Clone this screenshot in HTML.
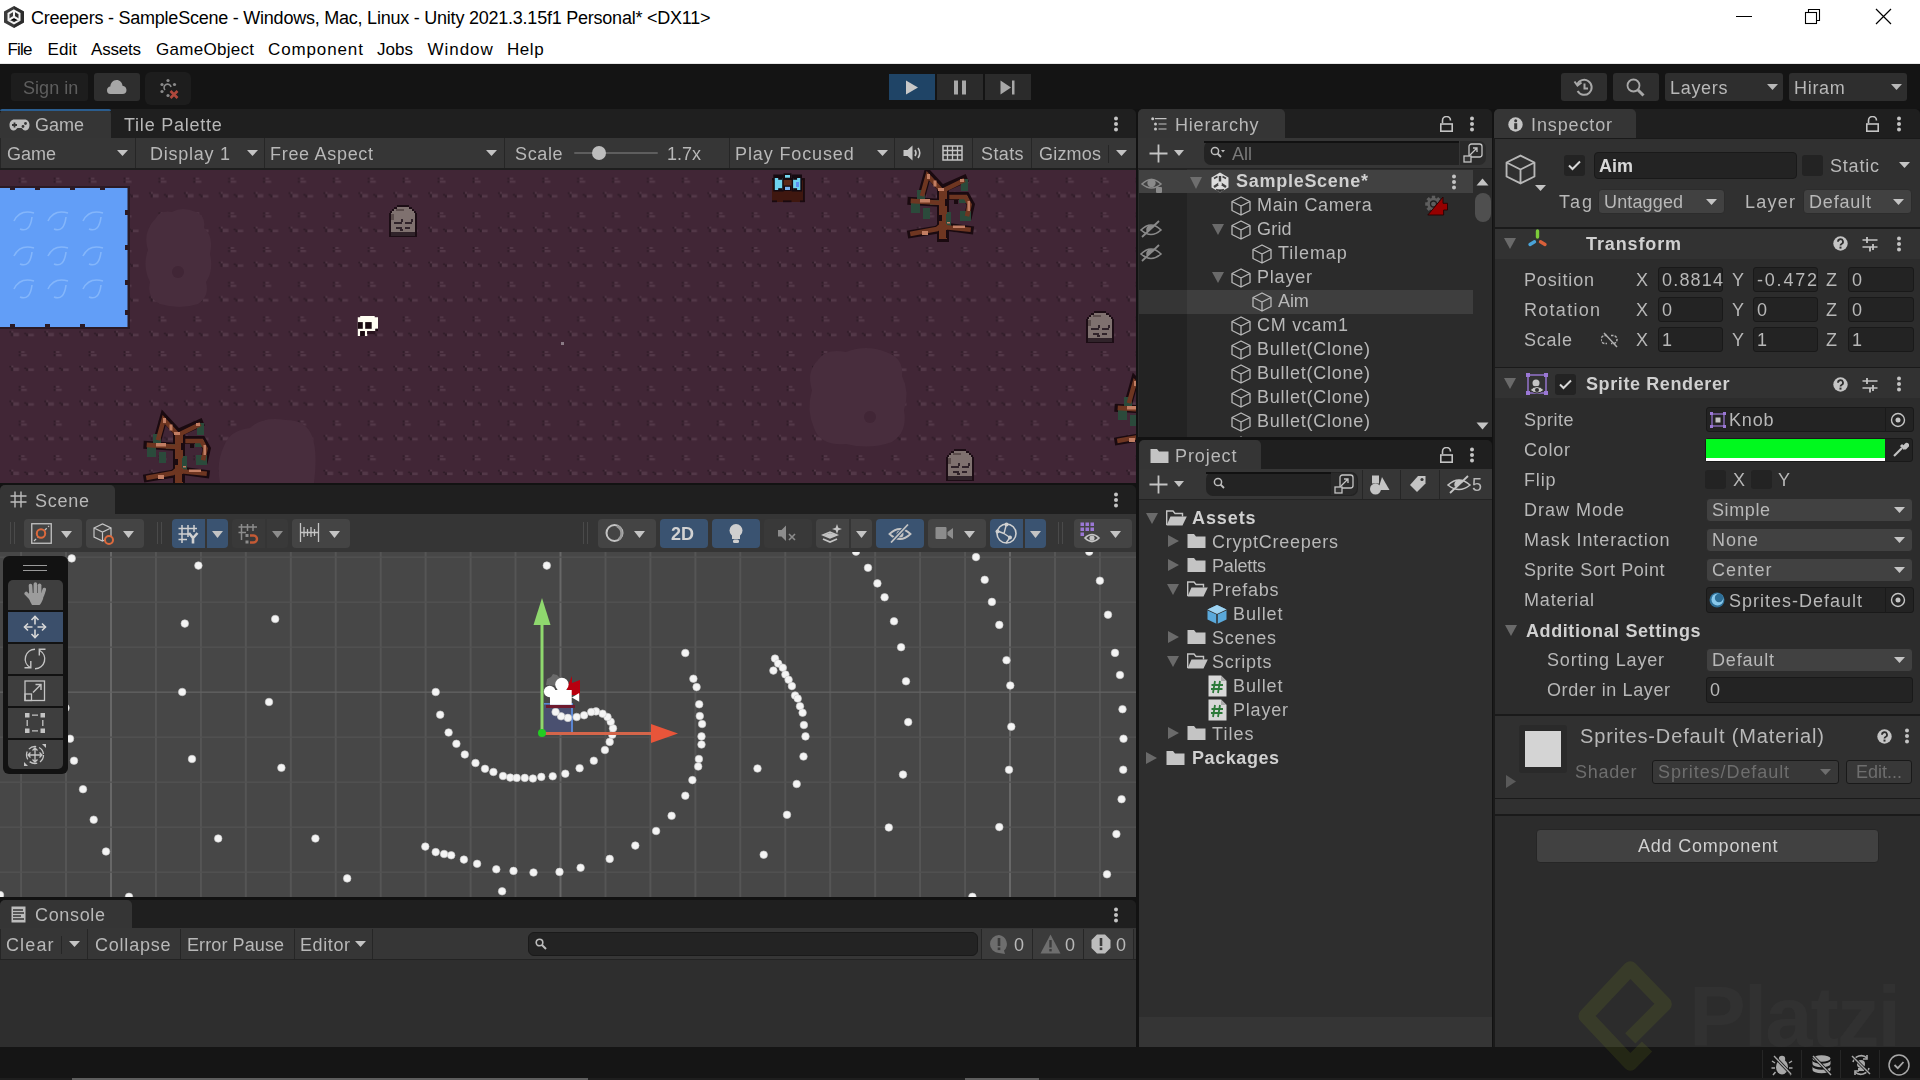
<!DOCTYPE html><html><head><meta charset="utf-8"><style>
*{margin:0;padding:0;box-sizing:border-box}
html,body{width:1920px;height:1080px;overflow:hidden;background:#121212;font-family:"Liberation Sans", sans-serif}
body>div,body>span{position:absolute}
.t{position:absolute;white-space:nowrap;line-height:1;font-family:"Liberation Sans", sans-serif;will-change:transform}
</style></head><body>
<div style="left:0px;top:0px;width:1920px;height:64px;background:#ffffff;"></div>
<div style="left:0px;top:63px;width:1920px;height:1px;background:#e8e8e8;"></div>
<span class="t" style="left:31.0px;top:9.12px;font-size:18px;letter-spacing:-0.231px;color:#000;font-weight:normal;will-change:auto">Creepers - SampleScene - Windows, Mac, Linux - Unity 2021.3.15f1 Personal* &lt;DX11&gt;</span>
<span class="t" style="left:7.5px;top:41.31px;font-size:17px;letter-spacing:-0.8px;color:#000;font-weight:normal;will-change:auto">File</span>
<span class="t" style="left:47.6px;top:41.31px;font-size:17px;letter-spacing:0.017px;color:#000;font-weight:normal;will-change:auto">Edit</span>
<span class="t" style="left:91.0px;top:41.31px;font-size:17px;letter-spacing:-0.2px;color:#000;font-weight:normal;will-change:auto">Assets</span>
<span class="t" style="left:156.0px;top:41.31px;font-size:17px;letter-spacing:0.278px;color:#000;font-weight:normal;will-change:auto">GameObject</span>
<span class="t" style="left:268.0px;top:41.31px;font-size:17px;letter-spacing:0.875px;color:#000;font-weight:normal;will-change:auto">Component</span>
<span class="t" style="left:377.0px;top:41.31px;font-size:17px;letter-spacing:0.0px;color:#000;font-weight:normal;will-change:auto">Jobs</span>
<span class="t" style="left:427.5px;top:41.31px;font-size:17px;letter-spacing:0.95px;color:#000;font-weight:normal;will-change:auto">Window</span>
<span class="t" style="left:507.0px;top:41.31px;font-size:17px;letter-spacing:0.567px;color:#000;font-weight:normal;will-change:auto">Help</span>
<div style="left:0px;top:64px;width:1920px;height:45px;background:#141414;"></div>
<svg style="position:absolute;left:3px;top:5px;" width="22" height="24" viewBox="0 0 22 24"><path d="M11 1L21 6.5V17.5L11 23L1 17.5V6.5Z" fill="#3a3a3a"/><path d="M11 1L21 6.5V17.5L11 23Z" fill="#1e1e1e" opacity=".5"/><path d="M11 5.5L16.5 8.7V15.2L11 18.4L5.5 15.2V8.7Z" fill="none" stroke="#f2f2f2" stroke-width="2"/><path d="M11 5.5V11.8M5.5 15.2L11 11.8L16.5 15.2" stroke="#f2f2f2" stroke-width="2"/></svg>
<div style="left:1736px;top:16px;width:16px;height:1px;background:#000;"></div>
<svg style="position:absolute;left:1804px;top:8px;" width="18" height="17" viewBox="0 0 18 17"><rect x="1.5" y="4.5" width="11" height="11" fill="none" stroke="#000" stroke-width="1.1"/><path d="M4.5 4.5V1.5H15.5V12.5H12.5" fill="none" stroke="#000" stroke-width="1.1"/></svg>
<svg style="position:absolute;left:1875px;top:8px;" width="18" height="17" viewBox="0 0 18 17"><path d="M1 1L16 16M16 1L1 16" stroke="#000" stroke-width="1.2"/></svg>
<div style="left:11px;top:73px;width:77px;height:28px;background:#1d1d1d;border-radius:3px"></div>
<span class="t" style="left:22.5px;top:78.52px;font-size:18px;letter-spacing:0.05px;color:#5e5e5e;font-weight:normal;">Sign in</span>
<div style="left:94px;top:73px;width:46px;height:28px;background:#2e2e2e;border-radius:3px"></div>
<svg style="position:absolute;left:106px;top:79px;" width="22" height="16" viewBox="0 0 22 16"><path d="M4.5 15C2 15 1 13.2 1 11.2C1 9.2 2.4 7.8 4.3 7.6C4.6 4 6.8 1 10.5 1C14 1 16.2 3.5 16.5 6.8C18.8 7 20.5 8.8 20.5 11C20.5 13.5 19 15 16.5 15Z" fill="#a6a6a6"/></svg>
<div style="left:145px;top:72px;width:46px;height:33px;background:#1d1d1d;border-radius:6px"></div>
<svg style="position:absolute;left:158px;top:78px;" width="24" height="24" viewBox="0 0 24 24"><circle cx="10" cy="2.5" r="1.6" fill="#8a8a8a"/><circle cx="4" cy="6.5" r="1.6" fill="#8a8a8a"/><circle cx="16.5" cy="6.5" r="1.6" fill="#8a8a8a"/><circle cx="4" cy="13.5" r="1.6" fill="#8a8a8a"/><circle cx="10" cy="17.5" r="1.6" fill="#8a8a8a"/><path d="M7 12A3.5 3.5 0 1 1 13 9" fill="none" stroke="#8a8a8a" stroke-width="1.6"/><path d="M12.5 13L19.5 20M19.5 13L12.5 20" stroke="#b0483c" stroke-width="2.6"/></svg>
<div style="left:889px;top:74px;width:46px;height:26px;background:#1f4466;"></div>
<svg style="position:absolute;left:905px;top:80px;" width="14" height="15" viewBox="0 0 14 15"><path d="M1 0.5L13 7.5L1 14.5Z" fill="#c8c8c8"/></svg>
<div style="left:937px;top:74px;width:46px;height:26px;background:#2b2b2b;"></div>
<svg style="position:absolute;left:953px;top:80px;" width="14" height="15" viewBox="0 0 14 15"><rect x="1" y="0.5" width="4" height="14" fill="#a8a8a8"/><rect x="9" y="0.5" width="4" height="14" fill="#a8a8a8"/></svg>
<div style="left:985px;top:74px;width:46px;height:26px;background:#2b2b2b;"></div>
<svg style="position:absolute;left:1000px;top:80px;" width="16" height="15" viewBox="0 0 16 15"><path d="M0.5 0.5L11 7.5L0.5 14.5Z" fill="#a8a8a8"/><rect x="12" y="0.5" width="2.5" height="14" fill="#a8a8a8"/></svg>
<div style="left:1561px;top:73px;width:46px;height:28px;background:#2e2e2e;border-radius:3px"></div>
<svg style="position:absolute;left:1573px;top:76px;" width="22" height="22" viewBox="0 0 22 22"><path d="M4.2 8.5A7.5 7.5 0 1 1 4.6 15" fill="none" stroke="#a8a8a8" stroke-width="2"/><path d="M1.5 5.5L4.5 9.5L8.5 6.5" fill="none" stroke="#a8a8a8" stroke-width="2"/><path d="M11.5 7.5V12.5H15" fill="none" stroke="#a8a8a8" stroke-width="2"/></svg>
<div style="left:1613px;top:73px;width:46px;height:28px;background:#2e2e2e;border-radius:3px"></div>
<svg style="position:absolute;left:1626px;top:78px;" width="20" height="20" viewBox="0 0 20 20"><circle cx="7.5" cy="7.5" r="6" fill="none" stroke="#a8a8a8" stroke-width="1.8"/><path d="M12 12L17.5 17.5" stroke="#a8a8a8" stroke-width="3"/></svg>
<div style="left:1665px;top:73px;width:118px;height:28px;background:#2e2e2e;border-radius:3px"></div>
<span class="t" style="left:1670px;top:78.52px;font-size:18px;letter-spacing:0.7px;color:#b8b8b8;font-weight:normal;">Layers</span>
<svg style="position:absolute;left:1767px;top:84px;" width="11" height="6" viewBox="0 0 11 6"><path d="M0 0H11L5.5 6Z" fill="#b8b8b8"/></svg>
<div style="left:1789px;top:73px;width:118px;height:28px;background:#2e2e2e;border-radius:3px"></div>
<span class="t" style="left:1794px;top:78.52px;font-size:18px;letter-spacing:0.7px;color:#b8b8b8;font-weight:normal;">Hiram</span>
<svg style="position:absolute;left:1891px;top:84px;" width="11" height="6" viewBox="0 0 11 6"><path d="M0 0H11L5.5 6Z" fill="#b8b8b8"/></svg>
<svg width="0" height="0" style="position:absolute"><defs>
<pattern id="tiles" x="9.3" y="7.6" width="34.9" height="34.7" patternUnits="userSpaceOnUse">
<rect x="0" y="0" width="34.9" height="34.7" fill="#412636"/>
<rect x="9.5" y="-0.3" width="2.2" height="2.2" fill="#301c28"/><rect x="11.7" y="-0.3" width="3.6" height="2.2" fill="#533848"/><rect x="9.5" y="3" width="2.2" height="2.2" fill="#301c28"/><rect x="11.7" y="3" width="5.8" height="2.2" fill="#533848"/>
<rect x="-0.2" y="14.7" width="2.2" height="1.7" fill="#301c28"/><rect x="2" y="14.5" width="2" height="1.8" fill="#533848"/><rect x="1.7" y="16.5" width="2.2" height="3.4" fill="#301c28"/><rect x="3.9" y="16.5" width="5.8" height="3.4" fill="#533848"/>
<rect x="14.8" y="16.4" width="2.2" height="1.6" fill="#301c28"/><rect x="16.7" y="17.3" width="2.2" height="2.6" fill="#301c28"/><rect x="18.9" y="17.3" width="5.6" height="2.6" fill="#533848"/>
</pattern>
<g id="tree">
<g fill="none" stroke="#1a0a10" stroke-linecap="square" stroke-linejoin="miter">
<path d="M11.7 25L17.7 3.4L32 19L53.6 9.4" stroke-width="8"/><path d="M33 22V66" stroke-width="12"/><path d="M33 33L1.5 31" stroke-width="8"/>
<path d="M41.6 26H56L60.8 34.5L58.4 45" stroke-width="8"/><path d="M1.5 64L27 59.7L33 55" stroke-width="8"/><path d="M38 57L59.6 60" stroke-width="8"/>
</g>
<g fill="#2b4a3b"><rect x="7" y="20" width="8" height="9"/><rect x="1" y="33" width="9" height="10"/><rect x="13" y="38" width="7" height="11"/><rect x="51" y="9" width="7" height="12"/><rect x="49" y="26" width="9" height="7"/><rect x="50" y="41" width="11" height="10"/><rect x="35" y="42" width="6" height="14"/><rect x="20" y="30" width="10" height="5"/></g>
<g fill="none" stroke="#6e3621" stroke-linecap="square" stroke-linejoin="miter">
<path d="M12.5 24L17.7 5.5L32 21L52.5 11" stroke-width="4.6"/><path d="M33 23V65" stroke-width="8"/><path d="M31 33L3 31" stroke-width="4.6"/>
<path d="M41.6 27H55.5L59.5 34.5L57.5 44" stroke-width="4.6"/><path d="M2.5 63.5L27 59L32 55" stroke-width="4.6"/><path d="M38 57.5L58.5 59.5" stroke-width="4.6"/>
</g>
<g fill="#1a0a10"><rect x="35" y="29" width="4" height="7"/><rect x="29" y="45" width="3" height="6"/><rect x="36" y="60" width="3" height="8"/><rect x="44" y="30" width="4" height="4"/></g>
<g fill="#2b4a3b"><rect x="36" y="44" width="4" height="10"/></g>
<g fill="#c27e63"><rect x="17" y="4" width="3" height="5"/><rect x="23.5" y="10.5" width="3" height="6"/><rect x="28" y="18" width="6" height="3"/><rect x="50" y="9" width="4" height="3"/><rect x="10" y="29" width="10" height="3.5"/><rect x="57.5" y="31" width="2.5" height="10"/><rect x="12" y="61" width="6" height="4"/><rect x="43" y="55.5" width="12" height="2.5"/><rect x="37" y="52" width="3" height="1.5"/></g>
</g>
<g id="tomb">
<path d="M9 0H21V2H24V4H26V6H28V8H29V32H1V8H2V6H4V4H6V2H9Z" fill="#1c0d15"/>
<path d="M9 2H21V4H24V6H26V8H27V28H3V8H4V6H6V4H9Z" fill="#7f716f"/>
<rect x="3" y="27" width="24" height="4" fill="#30232a"/>
<rect x="8" y="4" width="8" height="2" fill="#5b4d4c"/><rect x="3" y="9" width="3" height="6" fill="#5b4d4c"/>
<g fill="#30232a"><rect x="13" y="14" width="2" height="3"/><rect x="6" y="17" width="8" height="2"/><rect x="17" y="17" width="7" height="2"/><rect x="8" y="22" width="6" height="2"/><rect x="17" y="22" width="5" height="2"/><rect x="12" y="24" width="3" height="2"/><rect x="23" y="14" width="2" height="3"/></g>
</g>
</defs></svg>
<div style="left:0px;top:109px;width:1136px;height:29px;background:#1f1f1f;border-radius:5px 5px 0 0"></div>
<div style="left:0px;top:109px;width:111px;height:29px;background:#353535;border-radius:5px 5px 0 0"></div>
<div style="left:0px;top:109px;width:111px;height:2px;background:#2b5d8e;border-radius:4px 4px 0 0"></div>
<svg style="position:absolute;left:9px;top:119px;" width="21" height="12" viewBox="0 0 21 12"><path d="M5.5 0.5H15.5C18.8 0.5 20.5 3 20.5 6C20.5 9.3 18.8 11.5 16.2 11.5C14.5 11.5 13.8 10 12.5 9H8.5C7.2 10 6.5 11.5 4.8 11.5C2.2 11.5 0.5 9.3 0.5 6C0.5 3 2.2 0.5 5.5 0.5Z" fill="#bdbdbd"/><path d="M5.5 3.5V8.5M3 6H8" stroke="#353535" stroke-width="1.8"/><circle cx="14" cy="7.5" r="1.4" fill="#353535"/><circle cx="16.5" cy="4.5" r="1.4" fill="#353535"/></svg>
<span class="t" style="left:35.0px;top:115.82px;font-size:18px;letter-spacing:0.0px;color:#b8b8b8;font-weight:normal;">Game</span>
<span class="t" style="left:124.0px;top:115.82px;font-size:18px;letter-spacing:0.773px;color:#b8b8b8;font-weight:normal;">Tile Palette</span>
<svg style="position:absolute;left:1112.5px;top:116px;" width="6" height="16" viewBox="0 0 6 16"><circle cx="3" cy="2.5" r="2" fill="#c4c4c4"/><circle cx="3" cy="8" r="2" fill="#c4c4c4"/><circle cx="3" cy="13.5" r="2" fill="#c4c4c4"/></svg>
<div style="left:0px;top:138px;width:1136px;height:31px;background:#363636;"></div>
<div style="left:0px;top:168px;width:1136px;height:2px;background:#1e1e1e;"></div>
<div style="left:135px;top:138px;width:1px;height:30px;background:#262626;"></div>
<div style="left:264px;top:138px;width:1px;height:30px;background:#262626;"></div>
<div style="left:504px;top:138px;width:1px;height:30px;background:#262626;"></div>
<div style="left:729px;top:138px;width:1px;height:30px;background:#262626;"></div>
<div style="left:894px;top:138px;width:1px;height:30px;background:#262626;"></div>
<div style="left:933px;top:138px;width:1px;height:30px;background:#262626;"></div>
<div style="left:972px;top:138px;width:1px;height:30px;background:#262626;"></div>
<div style="left:1031px;top:138px;width:1px;height:30px;background:#262626;"></div>
<div style="left:1108px;top:145px;width:1px;height:18px;background:#262626;"></div>
<div style="left:0px;top:138px;width:1px;height:30px;background:#262626;"></div>
<span class="t" style="left:6.5px;top:144.72px;font-size:18px;letter-spacing:0.0px;color:#b8b8b8;font-weight:normal;">Game</span>
<svg style="position:absolute;left:117px;top:150px;" width="11" height="6" viewBox="0 0 11 6"><path d="M0 0H11L5.5 6Z" fill="#c4c4c4"/></svg>
<span class="t" style="left:150.0px;top:144.72px;font-size:18px;letter-spacing:0.75px;color:#b8b8b8;font-weight:normal;">Display 1</span>
<svg style="position:absolute;left:246.5px;top:150px;" width="11" height="6" viewBox="0 0 11 6"><path d="M0 0H11L5.5 6Z" fill="#c4c4c4"/></svg>
<span class="t" style="left:270.0px;top:144.72px;font-size:18px;letter-spacing:0.7px;color:#b8b8b8;font-weight:normal;">Free Aspect</span>
<svg style="position:absolute;left:486px;top:150px;" width="11" height="6" viewBox="0 0 11 6"><path d="M0 0H11L5.5 6Z" fill="#c4c4c4"/></svg>
<span class="t" style="left:514.5px;top:144.72px;font-size:18px;letter-spacing:0.625px;color:#b8b8b8;font-weight:normal;">Scale</span>
<div style="left:574px;top:152px;width:84px;height:2px;background:#5e5e5e;border-radius:1px"></div>
<svg style="position:absolute;left:591px;top:145px;" width="16" height="16" viewBox="0 0 16 16"><circle cx="8" cy="8" r="7" fill="#bcbcbc"/></svg>
<span class="t" style="left:667.0px;top:144.72px;font-size:18px;letter-spacing:0.0px;color:#b8b8b8;font-weight:normal;">1.7x</span>
<span class="t" style="left:735.0px;top:144.72px;font-size:18px;letter-spacing:0.882px;color:#b8b8b8;font-weight:normal;">Play Focused</span>
<svg style="position:absolute;left:876.5px;top:150px;" width="11" height="6" viewBox="0 0 11 6"><path d="M0 0H11L5.5 6Z" fill="#c4c4c4"/></svg>
<svg style="position:absolute;left:903px;top:145px;" width="20" height="16" viewBox="0 0 20 16"><path d="M0.5 5H4.5L9.5 0.5V15.5L4.5 11H0.5Z" fill="#c4c4c4"/><path d="M12 5Q14 8 12 11M15 3Q18.5 8 15 13" fill="none" stroke="#c4c4c4" stroke-width="1.6"/></svg>
<svg style="position:absolute;left:942px;top:145px;" width="21" height="16" viewBox="0 0 21 16"><rect x="1" y="1" width="19" height="14" fill="none" stroke="#c4c4c4" stroke-width="1.5"/><path d="M1 5.5H20M1 10H20M5.5 1V15M10.5 1V15M15.5 1V15" stroke="#c4c4c4" stroke-width="1.3"/></svg>
<span class="t" style="left:981.0px;top:144.72px;font-size:18px;letter-spacing:0.375px;color:#b8b8b8;font-weight:normal;">Stats</span>
<span class="t" style="left:1038.5px;top:144.72px;font-size:18px;letter-spacing:0.2px;color:#b8b8b8;font-weight:normal;">Gizmos</span>
<svg style="position:absolute;left:1115.5px;top:150px;" width="11" height="6" viewBox="0 0 11 6"><path d="M0 0H11L5.5 6Z" fill="#c4c4c4"/></svg>
<svg style="position:absolute;left:0px;top:170px;" width="1136" height="313" viewBox="0 0 1136 313"><rect width="1136" height="313" fill="url(#tiles)"/><g fill="#482d3d"><path d="M156 48Q160 40 172 42Q182 36 196 42Q206 46 204 58Q214 66 210 84Q214 100 206 112Q210 126 198 134Q180 140 160 134Q146 128 150 112Q142 96 148 80Q142 62 156 48Z"/><path d="M818 190Q826 178 846 182Q866 174 886 182Q904 188 902 206Q910 222 904 240Q908 262 892 272Q870 280 846 274Q820 276 814 258Q806 240 812 220Q806 202 818 190Z"/><path d="M224 276Q230 260 250 258Q262 246 286 250Q306 250 312 266Q318 282 314 313H220Q216 292 224 276Z"/></g><circle cx="178" cy="102" r="6" fill="#412636"/><circle cx="870" cy="247" r="6" fill="#412636"/><rect x="0" y="16" width="130" height="143" fill="#2b1a24"/><rect x="0" y="18" width="127.5" height="139" fill="#629ef7"/><g fill="#2b1a24"><rect x="10" y="16" width="5" height="4"/><rect x="35" y="16" width="5" height="4"/><rect x="70" y="16" width="5" height="4"/><rect x="100" y="16" width="5" height="4"/><rect x="10" y="154" width="5" height="4"/><rect x="45" y="154" width="5" height="4"/><rect x="80" y="154" width="5" height="4"/><rect x="125" y="40" width="4" height="5"/><rect x="125" y="75" width="4" height="5"/><rect x="125" y="110" width="4" height="5"/><rect x="125" y="140" width="4" height="5"/></g><g fill="none" stroke="#84b6fb" stroke-width="1.6"><path d="M14 51 Q20 39 34 43 M20 59 Q30 63 32 47"/><path d="M48 51 Q54 39 68 43 M54 59 Q64 63 66 47"/><path d="M83 51 Q89 39 103 43 M89 59 Q99 63 101 47"/><path d="M14 86 Q20 74 34 78 M20 94 Q30 98 32 82"/><path d="M48 86 Q54 74 68 78 M54 94 Q64 98 66 82"/><path d="M83 86 Q89 74 103 78 M89 94 Q99 98 101 82"/><path d="M14 119 Q20 107 34 111 M20 127 Q30 131 32 115"/><path d="M48 119 Q54 107 68 111 M54 127 Q64 131 66 115"/><path d="M83 119 Q89 107 103 111 M89 127 Q99 131 101 115"/></g><use href="#tomb" x="388" y="35"/><use href="#tomb" x="1085" y="141"/><use href="#tomb" x="945" y="279"/><use href="#tree" x="910" y="0"/><use href="#tree" x="146" y="244"/><use href="#tree" x="1117" y="207"/><rect x="772" y="8.2" width="32.7" height="23.8" fill="#3f170f"/><rect x="772" y="8.2" width="32.7" height="2" fill="#1a0a10"/><rect x="803" y="8.2" width="1.8" height="23.8" fill="#1a0a10"/><rect x="782.2" y="10" width="11" height="10" fill="#5a2818"/><rect x="773.3" y="4.5" width="10.4" height="17" fill="#150a10"/><rect x="774.8" y="8" width="7.4" height="12" fill="#6fd3ef"/><rect x="778.2" y="8" width="4" height="1.8" fill="#150a10"/><rect x="778.2" y="18.2" width="4" height="1.8" fill="#150a10"/><rect x="791.6" y="4.5" width="10.4" height="17" fill="#150a10"/><rect x="793.1" y="8" width="7.2" height="12" fill="#6fd3ef"/><rect x="796" y="12" width="3" height="5" fill="#5d8ff0"/><rect x="793.1" y="8" width="4" height="1.8" fill="#150a10"/><rect x="793.1" y="18.2" width="4" height="1.8" fill="#150a10"/><rect x="783.5" y="3.3" width="8" height="5.5" fill="#150a10"/><rect x="785" y="5" width="5" height="2.7" fill="#74d6f0"/><rect x="783.5" y="15.5" width="8" height="5.5" fill="#150a10"/><rect x="785" y="16.8" width="5" height="3.2" fill="#7ab4f4"/><rect x="772" y="30.4" width="5" height="1.8" fill="#1a0a10"/><rect x="783" y="30.4" width="8.5" height="1.8" fill="#1a0a10"/><rect x="800" y="30.4" width="4.7" height="1.8" fill="#1a0a10"/><path d="M360.2 146H374.7V147.3H378V158.8H375.4V161.1H367.2V166H364.8V161.1H360.2V166H357.8V147.3H360.2Z" fill="#fffdf2"/><rect x="357.8" y="152.1" width="5" height="6.7" fill="#1a0a10"/><rect x="365.2" y="152.1" width="6.5" height="6.7" fill="#1a0a10"/><rect x="360.2" y="161.1" width="4.6" height="4.9" fill="#1a0a10"/><rect x="367.2" y="161.1" width="8" height="3" fill="#2a1520"/><rect x="375.4" y="158.8" width="2.6" height="2.3" fill="#1a0a10"/><rect x="561" y="172" width="3" height="3" fill="#8a7a85"/></svg>
<div style="left:0px;top:485px;width:1136px;height:29px;background:#1f1f1f;border-radius:5px 5px 0 0"></div>
<div style="left:0px;top:485px;width:115px;height:29px;background:#353535;border-radius:5px 5px 0 0"></div>
<svg style="position:absolute;left:10px;top:491px;" width="18" height="17" viewBox="0 0 18 17"><path d="M5 0.5V16.5M11 0.5V16.5M0.5 5H16.5M0.5 11H16.5" stroke="#bdbdbd" stroke-width="1.4"/></svg>
<span class="t" style="left:35.0px;top:491.82px;font-size:18px;letter-spacing:0.75px;color:#b8b8b8;font-weight:normal;">Scene</span>
<svg style="position:absolute;left:1112.5px;top:492px;" width="6" height="16" viewBox="0 0 6 16"><circle cx="3" cy="2.5" r="2" fill="#c4c4c4"/><circle cx="3" cy="8" r="2" fill="#c4c4c4"/><circle cx="3" cy="13.5" r="2" fill="#c4c4c4"/></svg>
<div style="left:0px;top:514px;width:1136px;height:38px;background:#353535;"></div>
<div style="left:10px;top:522px;width:1.3px;height:22px;background:#4a4a4a;"></div>
<div style="left:14px;top:522px;width:1.3px;height:22px;background:#4a4a4a;"></div>
<div style="left:24px;top:519px;width:58px;height:29px;background:#444444;border-radius:4px"></div>
<svg style="position:absolute;left:31px;top:523px;" width="21" height="21" viewBox="0 0 21 21"><rect x="0.75" y="0.75" width="19.5" height="19.5" fill="none" stroke="#c4c4c4" stroke-width="1.3"/><path d="M3 18L18 3" stroke="#c4c4c4" stroke-width="1.3" stroke-dasharray="3 2"/><circle cx="10" cy="10.5" r="4.2" fill="#444" stroke="#dd6a3d" stroke-width="2"/></svg>
<svg style="position:absolute;left:61px;top:531px;" width="11" height="7" viewBox="0 0 11 7"><path d="M0 0H11L5.5 7Z" fill="#c4c4c4"/></svg>
<div style="left:86px;top:519px;width:58px;height:29px;background:#444444;border-radius:4px"></div>
<svg style="position:absolute;left:92px;top:522px;" width="24" height="24" viewBox="0 0 24 24"><path d="M2 6L10.5 2L19 6V15L10.5 19L2 15Z M2 6L10.5 10L19 6 M10.5 10V19" fill="none" stroke="#c4c4c4" stroke-width="1.2"/><circle cx="17" cy="18" r="4" fill="#444" stroke="#dd6a3d" stroke-width="2"/></svg>
<svg style="position:absolute;left:123px;top:531px;" width="11" height="7" viewBox="0 0 11 7"><path d="M0 0H11L5.5 7Z" fill="#c4c4c4"/></svg>
<div style="left:157px;top:522px;width:1.3px;height:22px;background:#4a4a4a;"></div>
<div style="left:161px;top:522px;width:1.3px;height:22px;background:#4a4a4a;"></div>
<div style="left:172px;top:519px;width:33px;height:29px;background:#3a5371;border-radius:4px 0 0 4px"></div>
<div style="left:207px;top:519px;width:21px;height:29px;background:#3a5371;border-radius:0 4px 4px 0"></div>
<svg style="position:absolute;left:178px;top:524px;" width="22" height="20" viewBox="0 0 22 20"><path d="M4 1V19M10 1V13M16 1V8M0.5 4.5H19M0.5 10H12M0.5 15.5H9" stroke="#d0d0d0" stroke-width="1.5"/><path d="M11 9L15 14L19.5 9M15 14V19.5" fill="none" stroke="#d0d0d0" stroke-width="2.6"/></svg>
<svg style="position:absolute;left:212px;top:531px;" width="11" height="7" viewBox="0 0 11 7"><path d="M0 0H11L5.5 7Z" fill="#c4c4c4"/></svg>
<div style="left:232px;top:519px;width:33px;height:29px;background:#393939;border-radius:4px 0 0 4px"></div>
<div style="left:267px;top:519px;width:21px;height:29px;background:#393939;border-radius:0 4px 4px 0"></div>
<svg style="position:absolute;left:238px;top:523px;" width="22" height="22" viewBox="0 0 22 22"><path d="M3.5 1V17M9.5 1V8M15 1V8M0.5 4H19M0.5 9.5H8" stroke="#8c8c8c" stroke-width="1.5"/><rect x="7.5" y="11" width="3" height="3" fill="#8c8c8c"/><rect x="7.5" y="17.5" width="3" height="3" fill="#8c8c8c"/><path d="M12 12.5H15.5A3.5 3.5 0 0 1 15.5 19.5H12" fill="none" stroke="#c35a35" stroke-width="2.4"/></svg>
<svg style="position:absolute;left:272px;top:531px;" width="11" height="7" viewBox="0 0 11 7"><path d="M0 0H11L5.5 7Z" fill="#8c8c8c"/></svg>
<div style="left:292px;top:519px;width:58px;height:29px;background:#444444;border-radius:4px"></div>
<svg style="position:absolute;left:299px;top:522px;" width="21" height="22" viewBox="0 0 21 22"><path d="M1.5 1V20M19.5 1V20M1.5 10.5H19.5M5 5V15M8.5 7V14M12 5V15M15.5 7V14" stroke="#c4c4c4" stroke-width="1.3"/></svg>
<svg style="position:absolute;left:329px;top:531px;" width="11" height="7" viewBox="0 0 11 7"><path d="M0 0H11L5.5 7Z" fill="#c4c4c4"/></svg>
<div style="left:583px;top:522px;width:1.3px;height:22px;background:#4a4a4a;"></div>
<div style="left:587px;top:522px;width:1.3px;height:22px;background:#4a4a4a;"></div>
<div style="left:598px;top:519px;width:58px;height:29px;background:#444444;border-radius:4px"></div>
<svg style="position:absolute;left:604px;top:522px;" width="22" height="22" viewBox="0 0 22 22"><circle cx="10.5" cy="11" r="8" fill="none" stroke="#c4c4c4" stroke-width="2"/><path d="M13 4A8 8 0 0 1 14.5 17.5" fill="none" stroke="#9a9a9a" stroke-width="2.5"/></svg>
<svg style="position:absolute;left:634px;top:531px;" width="11" height="7" viewBox="0 0 11 7"><path d="M0 0H11L5.5 7Z" fill="#c4c4c4"/></svg>
<div style="left:660px;top:519px;width:48px;height:29px;background:#3a5371;border-radius:4px"></div>
<span class="t" style="left:671px;top:524px;font-size:18px;font-weight:bold;color:#d2d2d2;letter-spacing:0px;line-height:20px">2D</span>
<div style="left:712px;top:519px;width:48px;height:29px;background:#3a5371;border-radius:4px"></div>
<svg style="position:absolute;left:727px;top:523px;" width="18" height="21" viewBox="0 0 18 21"><circle cx="9" cy="7.5" r="6.5" fill="#cfcfcf"/><rect x="5" y="12" width="8" height="4" fill="#cfcfcf"/><rect x="6" y="16.5" width="6" height="3.5" rx="1.5" fill="#cfcfcf"/></svg>
<div style="left:764px;top:519px;width:48px;height:29px;background:#393939;border-radius:4px"></div>
<svg style="position:absolute;left:777px;top:524px;" width="22" height="20" viewBox="0 0 22 20"><path d="M1 6H4.5L9 1.5V17L4.5 12.5H1Z" fill="#8c8c8c"/><path d="M12 10L18 16M18 10L12 16" stroke="#8c8c8c" stroke-width="1.6"/></svg>
<div style="left:816px;top:519px;width:33px;height:29px;background:#444444;border-radius:4px 0 0 4px"></div>
<div style="left:851px;top:519px;width:21px;height:29px;background:#444444;border-radius:0 4px 4px 0"></div>
<svg style="position:absolute;left:821px;top:523px;" width="24" height="22" viewBox="0 0 24 22"><path d="M2 12L9 9L16 12L9 15Z" fill="none" stroke="#c4c4c4" stroke-width="1.6"/><path d="M2 16L9 19L16 16" fill="none" stroke="#c4c4c4" stroke-width="1.8"/><path d="M3 12L9 15L16 12L9 10" fill="#c4c4c4"/><path d="M16 1L17.3 4.7L21 6L17.3 7.3L16 11L14.7 7.3L11 6L14.7 4.7Z" fill="#c4c4c4"/></svg>
<svg style="position:absolute;left:856px;top:531px;" width="11" height="7" viewBox="0 0 11 7"><path d="M0 0H11L5.5 7Z" fill="#c4c4c4"/></svg>
<div style="left:876px;top:519px;width:48px;height:29px;background:#3a5371;border-radius:4px"></div>
<svg style="position:absolute;left:888px;top:523px;" width="24" height="20" viewBox="0 0 24 20"><path d="M1.5 11Q12 1 22.5 11Q12 21 1.5 11Z" fill="none" stroke="#c4c4c4" stroke-width="1.8"/><circle cx="12" cy="11" r="3.5" fill="#c4c4c4"/><path d="M3 19.5L20 1.5" stroke="#3a5371" stroke-width="4"/><path d="M3 19.5L20 1.5" stroke="#c4c4c4" stroke-width="1.8"/></svg>
<div style="left:928px;top:519px;width:58px;height:29px;background:#444444;border-radius:4px"></div>
<svg style="position:absolute;left:935px;top:526px;" width="20" height="15" viewBox="0 0 20 15"><rect x="0.5" y="1" width="11" height="12" rx="1" fill="#8c8c8c"/><path d="M12.5 6L18 2V13L12.5 9Z" fill="#8c8c8c"/></svg>
<svg style="position:absolute;left:964px;top:531px;" width="11" height="7" viewBox="0 0 11 7"><path d="M0 0H11L5.5 7Z" fill="#c4c4c4"/></svg>
<div style="left:990px;top:519px;width:33px;height:29px;background:#3a5371;border-radius:4px 0 0 4px"></div>
<div style="left:1025px;top:519px;width:21px;height:29px;background:#3a5371;border-radius:0 4px 4px 0"></div>
<svg style="position:absolute;left:995px;top:522px;" width="23" height="23" viewBox="0 0 23 23"><circle cx="11.5" cy="11.5" r="9.5" fill="none" stroke="#d0d0d0" stroke-width="1.6"/><path d="M11.5 2L9 11.5L15 15.5M2.5 9L9 11.5M15 15.5L11 21" fill="none" stroke="#d0d0d0" stroke-width="1.4"/><circle cx="11.5" cy="2.5" r="2" fill="#d0d0d0"/><circle cx="2.5" cy="9.5" r="2" fill="#d0d0d0"/><circle cx="15" cy="15.5" r="2" fill="#d0d0d0"/></svg>
<svg style="position:absolute;left:1030px;top:531px;" width="11" height="7" viewBox="0 0 11 7"><path d="M0 0H11L5.5 7Z" fill="#c4c4c4"/></svg>
<div style="left:1058px;top:522px;width:1.3px;height:22px;background:#4a4a4a;"></div>
<div style="left:1062px;top:522px;width:1.3px;height:22px;background:#4a4a4a;"></div>
<div style="left:1074px;top:519px;width:58px;height:29px;background:#444444;border-radius:4px"></div>
<svg style="position:absolute;left:1080px;top:522px;" width="24" height="24" viewBox="0 0 24 24"><g fill="#9b78d6"><rect x="0.5" y="0.5" width="3.5" height="3.5"/><rect x="5.5" y="0.5" width="3.5" height="3.5"/><rect x="10.5" y="0.5" width="3.5" height="3.5"/><rect x="0.5" y="5.5" width="3.5" height="3.5"/><rect x="5.5" y="5.5" width="3.5" height="3.5"/><rect x="10.5" y="5.5" width="3.5" height="3.5"/><rect x="0.5" y="10.5" width="3.5" height="3.5"/></g><path d="M5 16Q12 9 19 16Q12 23 5 16Z" fill="#444" stroke="#c4c4c4" stroke-width="1.7"/><circle cx="12" cy="16" r="2.6" fill="#c4c4c4"/></svg>
<svg style="position:absolute;left:1110px;top:531px;" width="11" height="7" viewBox="0 0 11 7"><path d="M0 0H11L5.5 7Z" fill="#c4c4c4"/></svg>
<svg style="position:absolute;left:0px;top:552px;" width="1136" height="345" viewBox="0 0 1136 345"><rect width="1136" height="345" fill="#474747"/><rect x="20.1" y="0" width="2" height="345" fill="#555555"/><rect x="65.0" y="0" width="2" height="345" fill="#555555"/><rect x="110.0" y="0" width="2" height="345" fill="#676767"/><rect x="154.9" y="0" width="2" height="345" fill="#555555"/><rect x="199.9" y="0" width="2" height="345" fill="#555555"/><rect x="244.8" y="0" width="2" height="345" fill="#555555"/><rect x="289.8" y="0" width="2" height="345" fill="#555555"/><rect x="334.7" y="0" width="2" height="345" fill="#555555"/><rect x="379.7" y="0" width="2" height="345" fill="#555555"/><rect x="424.6" y="0" width="2" height="345" fill="#555555"/><rect x="469.6" y="0" width="2" height="345" fill="#555555"/><rect x="514.5" y="0" width="2" height="345" fill="#555555"/><rect x="559.5" y="0" width="2" height="345" fill="#676767"/><rect x="604.5" y="0" width="2" height="345" fill="#555555"/><rect x="649.4" y="0" width="2" height="345" fill="#555555"/><rect x="694.4" y="0" width="2" height="345" fill="#555555"/><rect x="739.3" y="0" width="2" height="345" fill="#555555"/><rect x="784.3" y="0" width="2" height="345" fill="#555555"/><rect x="829.2" y="0" width="2" height="345" fill="#555555"/><rect x="874.2" y="0" width="2" height="345" fill="#555555"/><rect x="919.1" y="0" width="2" height="345" fill="#555555"/><rect x="964.1" y="0" width="2" height="345" fill="#555555"/><rect x="1009.0" y="0" width="2" height="345" fill="#676767"/><rect x="1054.0" y="0" width="2" height="345" fill="#555555"/><rect x="1098.9" y="0" width="2" height="345" fill="#555555"/><rect x="0" y="4.5" width="1136" height="1.3" fill="#535353"/><rect x="0" y="49.5" width="1136" height="1.3" fill="#535353"/><rect x="0" y="94.5" width="1136" height="1.3" fill="#535353"/><rect x="0" y="139.5" width="1136" height="1.3" fill="#636363"/><rect x="0" y="184.5" width="1136" height="1.3" fill="#535353"/><rect x="0" y="229.5" width="1136" height="1.3" fill="#535353"/><rect x="0" y="274.5" width="1136" height="1.3" fill="#535353"/><rect x="0" y="319.5" width="1136" height="1.3" fill="#535353"/><rect x="544" y="151" width="29" height="30" fill="#4a5070"/><rect x="571" y="151" width="2" height="30" fill="#5a85d0"/><rect x="544" y="151" width="29" height="1.5" fill="#5a85d0"/><circle cx="71.7" cy="6.4" r="3.8" fill="#f4f4f4" stroke="#c8c8c8" stroke-width="0.6"/><circle cx="198.4" cy="13.6" r="3.8" fill="#f4f4f4" stroke="#c8c8c8" stroke-width="0.6"/><circle cx="184.8" cy="71.6" r="3.8" fill="#f4f4f4" stroke="#c8c8c8" stroke-width="0.6"/><circle cx="275.2" cy="67.0" r="3.8" fill="#f4f4f4" stroke="#c8c8c8" stroke-width="0.6"/><circle cx="182.2" cy="140.0" r="3.8" fill="#f4f4f4" stroke="#c8c8c8" stroke-width="0.6"/><circle cx="269.0" cy="150.0" r="3.8" fill="#f4f4f4" stroke="#c8c8c8" stroke-width="0.6"/><circle cx="65.5" cy="155.9" r="3.8" fill="#f4f4f4" stroke="#c8c8c8" stroke-width="0.6"/><circle cx="70.0" cy="186.7" r="3.8" fill="#f4f4f4" stroke="#c8c8c8" stroke-width="0.6"/><circle cx="74.0" cy="208.7" r="3.8" fill="#f4f4f4" stroke="#c8c8c8" stroke-width="0.6"/><circle cx="192.0" cy="207.0" r="3.8" fill="#f4f4f4" stroke="#c8c8c8" stroke-width="0.6"/><circle cx="281.4" cy="215.8" r="3.8" fill="#f4f4f4" stroke="#c8c8c8" stroke-width="0.6"/><circle cx="83.0" cy="237.2" r="3.8" fill="#f4f4f4" stroke="#c8c8c8" stroke-width="0.6"/><circle cx="93.7" cy="267.7" r="3.8" fill="#f4f4f4" stroke="#c8c8c8" stroke-width="0.6"/><circle cx="218.2" cy="286.5" r="3.8" fill="#f4f4f4" stroke="#c8c8c8" stroke-width="0.6"/><circle cx="315.4" cy="286.5" r="3.8" fill="#f4f4f4" stroke="#c8c8c8" stroke-width="0.6"/><circle cx="106.0" cy="299.5" r="3.8" fill="#f4f4f4" stroke="#c8c8c8" stroke-width="0.6"/><circle cx="347.2" cy="326.4" r="3.8" fill="#f4f4f4" stroke="#c8c8c8" stroke-width="0.6"/><circle cx="129.0" cy="344.8" r="3.8" fill="#f4f4f4" stroke="#c8c8c8" stroke-width="0.6"/><circle cx="0.0" cy="343.0" r="3.8" fill="#f4f4f4" stroke="#c8c8c8" stroke-width="0.6"/><circle cx="546.8" cy="13.6" r="3.8" fill="#f4f4f4" stroke="#c8c8c8" stroke-width="0.6"/><circle cx="685.3" cy="101.0" r="3.8" fill="#f4f4f4" stroke="#c8c8c8" stroke-width="0.6"/><circle cx="435.7" cy="140.0" r="3.8" fill="#f4f4f4" stroke="#c8c8c8" stroke-width="0.6"/><circle cx="440.2" cy="162.7" r="3.8" fill="#f4f4f4" stroke="#c8c8c8" stroke-width="0.6"/><circle cx="448.6" cy="180.5" r="3.8" fill="#f4f4f4" stroke="#c8c8c8" stroke-width="0.6"/><circle cx="456.4" cy="191.8" r="3.8" fill="#f4f4f4" stroke="#c8c8c8" stroke-width="0.6"/><circle cx="464.8" cy="202.5" r="3.8" fill="#f4f4f4" stroke="#c8c8c8" stroke-width="0.6"/><circle cx="475.5" cy="211.0" r="3.8" fill="#f4f4f4" stroke="#c8c8c8" stroke-width="0.6"/><circle cx="485.0" cy="216.8" r="3.8" fill="#f4f4f4" stroke="#c8c8c8" stroke-width="0.6"/><circle cx="493.4" cy="220.0" r="3.8" fill="#f4f4f4" stroke="#c8c8c8" stroke-width="0.6"/><circle cx="503.0" cy="224.0" r="3.8" fill="#f4f4f4" stroke="#c8c8c8" stroke-width="0.6"/><circle cx="510.2" cy="225.6" r="3.8" fill="#f4f4f4" stroke="#c8c8c8" stroke-width="0.6"/><circle cx="516.7" cy="225.9" r="3.8" fill="#f4f4f4" stroke="#c8c8c8" stroke-width="0.6"/><circle cx="524.8" cy="225.9" r="3.8" fill="#f4f4f4" stroke="#c8c8c8" stroke-width="0.6"/><circle cx="532.9" cy="226.5" r="3.8" fill="#f4f4f4" stroke="#c8c8c8" stroke-width="0.6"/><circle cx="541.3" cy="224.9" r="3.8" fill="#f4f4f4" stroke="#c8c8c8" stroke-width="0.6"/><circle cx="552.7" cy="224.3" r="3.8" fill="#f4f4f4" stroke="#c8c8c8" stroke-width="0.6"/><circle cx="565.3" cy="221.7" r="3.8" fill="#f4f4f4" stroke="#c8c8c8" stroke-width="0.6"/><circle cx="579.6" cy="216.2" r="3.8" fill="#f4f4f4" stroke="#c8c8c8" stroke-width="0.6"/><circle cx="593.8" cy="208.7" r="3.8" fill="#f4f4f4" stroke="#c8c8c8" stroke-width="0.6"/><circle cx="604.9" cy="198.0" r="3.8" fill="#f4f4f4" stroke="#c8c8c8" stroke-width="0.6"/><circle cx="609.7" cy="189.9" r="3.8" fill="#f4f4f4" stroke="#c8c8c8" stroke-width="0.6"/><circle cx="612.3" cy="182.8" r="3.8" fill="#f4f4f4" stroke="#c8c8c8" stroke-width="0.6"/><circle cx="613.0" cy="176.3" r="3.8" fill="#f4f4f4" stroke="#c8c8c8" stroke-width="0.6"/><circle cx="610.7" cy="169.8" r="3.8" fill="#f4f4f4" stroke="#c8c8c8" stroke-width="0.6"/><circle cx="607.5" cy="165.0" r="3.8" fill="#f4f4f4" stroke="#c8c8c8" stroke-width="0.6"/><circle cx="602.6" cy="161.7" r="3.8" fill="#f4f4f4" stroke="#c8c8c8" stroke-width="0.6"/><circle cx="596.0" cy="159.4" r="3.8" fill="#f4f4f4" stroke="#c8c8c8" stroke-width="0.6"/><circle cx="591.2" cy="160.0" r="3.8" fill="#f4f4f4" stroke="#c8c8c8" stroke-width="0.6"/><circle cx="584.1" cy="163.3" r="3.8" fill="#f4f4f4" stroke="#c8c8c8" stroke-width="0.6"/><circle cx="576.7" cy="165.0" r="3.8" fill="#f4f4f4" stroke="#c8c8c8" stroke-width="0.6"/><circle cx="567.9" cy="165.9" r="3.8" fill="#f4f4f4" stroke="#c8c8c8" stroke-width="0.6"/><circle cx="561.1" cy="164.3" r="3.8" fill="#f4f4f4" stroke="#c8c8c8" stroke-width="0.6"/><circle cx="555.6" cy="160.0" r="3.8" fill="#f4f4f4" stroke="#c8c8c8" stroke-width="0.6"/><circle cx="693.4" cy="126.7" r="3.8" fill="#f4f4f4" stroke="#c8c8c8" stroke-width="0.6"/><circle cx="696.6" cy="135.1" r="3.8" fill="#f4f4f4" stroke="#c8c8c8" stroke-width="0.6"/><circle cx="699.2" cy="152.3" r="3.8" fill="#f4f4f4" stroke="#c8c8c8" stroke-width="0.6"/><circle cx="699.8" cy="164.0" r="3.8" fill="#f4f4f4" stroke="#c8c8c8" stroke-width="0.6"/><circle cx="702.1" cy="172.0" r="3.8" fill="#f4f4f4" stroke="#c8c8c8" stroke-width="0.6"/><circle cx="701.5" cy="184.4" r="3.8" fill="#f4f4f4" stroke="#c8c8c8" stroke-width="0.6"/><circle cx="701.5" cy="192.5" r="3.8" fill="#f4f4f4" stroke="#c8c8c8" stroke-width="0.6"/><circle cx="698.9" cy="207.0" r="3.8" fill="#f4f4f4" stroke="#c8c8c8" stroke-width="0.6"/><circle cx="698.2" cy="214.5" r="3.8" fill="#f4f4f4" stroke="#c8c8c8" stroke-width="0.6"/><circle cx="692.4" cy="228.1" r="3.8" fill="#f4f4f4" stroke="#c8c8c8" stroke-width="0.6"/><circle cx="685.3" cy="243.7" r="3.8" fill="#f4f4f4" stroke="#c8c8c8" stroke-width="0.6"/><circle cx="671.6" cy="263.8" r="3.8" fill="#f4f4f4" stroke="#c8c8c8" stroke-width="0.6"/><circle cx="656.1" cy="279.0" r="3.8" fill="#f4f4f4" stroke="#c8c8c8" stroke-width="0.6"/><circle cx="635.3" cy="293.6" r="3.8" fill="#f4f4f4" stroke="#c8c8c8" stroke-width="0.6"/><circle cx="609.7" cy="306.9" r="3.8" fill="#f4f4f4" stroke="#c8c8c8" stroke-width="0.6"/><circle cx="580.6" cy="315.7" r="3.8" fill="#f4f4f4" stroke="#c8c8c8" stroke-width="0.6"/><circle cx="559.5" cy="319.9" r="3.8" fill="#f4f4f4" stroke="#c8c8c8" stroke-width="0.6"/><circle cx="533.5" cy="320.5" r="3.8" fill="#f4f4f4" stroke="#c8c8c8" stroke-width="0.6"/><circle cx="513.5" cy="318.9" r="3.8" fill="#f4f4f4" stroke="#c8c8c8" stroke-width="0.6"/><circle cx="496.3" cy="317.3" r="3.8" fill="#f4f4f4" stroke="#c8c8c8" stroke-width="0.6"/><circle cx="477.1" cy="311.8" r="3.8" fill="#f4f4f4" stroke="#c8c8c8" stroke-width="0.6"/><circle cx="463.9" cy="307.6" r="3.8" fill="#f4f4f4" stroke="#c8c8c8" stroke-width="0.6"/><circle cx="451.2" cy="303.3" r="3.8" fill="#f4f4f4" stroke="#c8c8c8" stroke-width="0.6"/><circle cx="444.1" cy="302.0" r="3.8" fill="#f4f4f4" stroke="#c8c8c8" stroke-width="0.6"/><circle cx="435.7" cy="300.1" r="3.8" fill="#f4f4f4" stroke="#c8c8c8" stroke-width="0.6"/><circle cx="425.3" cy="294.6" r="3.8" fill="#f4f4f4" stroke="#c8c8c8" stroke-width="0.6"/><circle cx="502.1" cy="339.3" r="3.8" fill="#f4f4f4" stroke="#c8c8c8" stroke-width="0.6"/><circle cx="856.0" cy="-0.4" r="3.8" fill="#f4f4f4" stroke="#c8c8c8" stroke-width="0.6"/><circle cx="868.0" cy="15.8" r="3.8" fill="#f4f4f4" stroke="#c8c8c8" stroke-width="0.6"/><circle cx="877.4" cy="31.4" r="3.8" fill="#f4f4f4" stroke="#c8c8c8" stroke-width="0.6"/><circle cx="884.6" cy="45.3" r="3.8" fill="#f4f4f4" stroke="#c8c8c8" stroke-width="0.6"/><circle cx="894.0" cy="69.3" r="3.8" fill="#f4f4f4" stroke="#c8c8c8" stroke-width="0.6"/><circle cx="901.1" cy="95.2" r="3.8" fill="#f4f4f4" stroke="#c8c8c8" stroke-width="0.6"/><circle cx="906.0" cy="129.3" r="3.8" fill="#f4f4f4" stroke="#c8c8c8" stroke-width="0.6"/><circle cx="908.2" cy="170.1" r="3.8" fill="#f4f4f4" stroke="#c8c8c8" stroke-width="0.6"/><circle cx="903.0" cy="222.6" r="3.8" fill="#f4f4f4" stroke="#c8c8c8" stroke-width="0.6"/><circle cx="888.8" cy="275.5" r="3.8" fill="#f4f4f4" stroke="#c8c8c8" stroke-width="0.6"/><circle cx="976.0" cy="5.1" r="3.8" fill="#f4f4f4" stroke="#c8c8c8" stroke-width="0.6"/><circle cx="984.7" cy="27.8" r="3.8" fill="#f4f4f4" stroke="#c8c8c8" stroke-width="0.6"/><circle cx="991.9" cy="49.9" r="3.8" fill="#f4f4f4" stroke="#c8c8c8" stroke-width="0.6"/><circle cx="999.3" cy="72.9" r="3.8" fill="#f4f4f4" stroke="#c8c8c8" stroke-width="0.6"/><circle cx="1006.5" cy="108.2" r="3.8" fill="#f4f4f4" stroke="#c8c8c8" stroke-width="0.6"/><circle cx="1010.3" cy="133.5" r="3.8" fill="#f4f4f4" stroke="#c8c8c8" stroke-width="0.6"/><circle cx="1011.3" cy="174.7" r="3.8" fill="#f4f4f4" stroke="#c8c8c8" stroke-width="0.6"/><circle cx="1009.0" cy="217.8" r="3.8" fill="#f4f4f4" stroke="#c8c8c8" stroke-width="0.6"/><circle cx="999.3" cy="275.1" r="3.8" fill="#f4f4f4" stroke="#c8c8c8" stroke-width="0.6"/><circle cx="972.4" cy="344.8" r="3.8" fill="#f4f4f4" stroke="#c8c8c8" stroke-width="0.6"/><circle cx="775.0" cy="106.6" r="3.8" fill="#f4f4f4" stroke="#c8c8c8" stroke-width="0.6"/><circle cx="778.2" cy="111.5" r="3.8" fill="#f4f4f4" stroke="#c8c8c8" stroke-width="0.6"/><circle cx="782.8" cy="115.7" r="3.8" fill="#f4f4f4" stroke="#c8c8c8" stroke-width="0.6"/><circle cx="773.4" cy="118.6" r="3.8" fill="#f4f4f4" stroke="#c8c8c8" stroke-width="0.6"/><circle cx="785.4" cy="122.5" r="3.8" fill="#f4f4f4" stroke="#c8c8c8" stroke-width="0.6"/><circle cx="788.6" cy="127.7" r="3.8" fill="#f4f4f4" stroke="#c8c8c8" stroke-width="0.6"/><circle cx="791.9" cy="134.1" r="3.8" fill="#f4f4f4" stroke="#c8c8c8" stroke-width="0.6"/><circle cx="795.1" cy="143.5" r="3.8" fill="#f4f4f4" stroke="#c8c8c8" stroke-width="0.6"/><circle cx="797.7" cy="146.5" r="3.8" fill="#f4f4f4" stroke="#c8c8c8" stroke-width="0.6"/><circle cx="800.0" cy="154.2" r="3.8" fill="#f4f4f4" stroke="#c8c8c8" stroke-width="0.6"/><circle cx="802.6" cy="160.7" r="3.8" fill="#f4f4f4" stroke="#c8c8c8" stroke-width="0.6"/><circle cx="803.9" cy="173.0" r="3.8" fill="#f4f4f4" stroke="#c8c8c8" stroke-width="0.6"/><circle cx="805.5" cy="184.4" r="3.8" fill="#f4f4f4" stroke="#c8c8c8" stroke-width="0.6"/><circle cx="803.5" cy="204.5" r="3.8" fill="#f4f4f4" stroke="#c8c8c8" stroke-width="0.6"/><circle cx="796.7" cy="232.0" r="3.8" fill="#f4f4f4" stroke="#c8c8c8" stroke-width="0.6"/><circle cx="787.0" cy="262.8" r="3.8" fill="#f4f4f4" stroke="#c8c8c8" stroke-width="0.6"/><circle cx="763.7" cy="302.7" r="3.8" fill="#f4f4f4" stroke="#c8c8c8" stroke-width="0.6"/><circle cx="757.5" cy="216.5" r="3.8" fill="#f4f4f4" stroke="#c8c8c8" stroke-width="0.6"/><circle cx="1089.2" cy="-0.4" r="3.8" fill="#f4f4f4" stroke="#c8c8c8" stroke-width="0.6"/><circle cx="1099.9" cy="28.7" r="3.8" fill="#f4f4f4" stroke="#c8c8c8" stroke-width="0.6"/><circle cx="1108.0" cy="62.7" r="3.8" fill="#f4f4f4" stroke="#c8c8c8" stroke-width="0.6"/><circle cx="1115.0" cy="100.9" r="3.8" fill="#f4f4f4" stroke="#c8c8c8" stroke-width="0.6"/><circle cx="1120.0" cy="123.0" r="3.8" fill="#f4f4f4" stroke="#c8c8c8" stroke-width="0.6"/><circle cx="1122.5" cy="157.2" r="3.8" fill="#f4f4f4" stroke="#c8c8c8" stroke-width="0.6"/><circle cx="1123.5" cy="186.7" r="3.8" fill="#f4f4f4" stroke="#c8c8c8" stroke-width="0.6"/><circle cx="1123.2" cy="217.7" r="3.8" fill="#f4f4f4" stroke="#c8c8c8" stroke-width="0.6"/><circle cx="1121.6" cy="247.2" r="3.8" fill="#f4f4f4" stroke="#c8c8c8" stroke-width="0.6"/><circle cx="1116.4" cy="282.1" r="3.8" fill="#f4f4f4" stroke="#c8c8c8" stroke-width="0.6"/><circle cx="1107.0" cy="322.3" r="3.8" fill="#f4f4f4" stroke="#c8c8c8" stroke-width="0.6"/><rect x="540.5" y="70" width="3" height="111" fill="#8fd86e"/><path d="M542 46L533.5 73H550.5Z" fill="#8fd86e"/><rect x="542" y="180" width="110" height="3" fill="#d4654a"/><path d="M678 181.5L651 172V191Z" fill="#e8553a"/><circle cx="542" cy="181" r="4" fill="#22cc22"/><path d="M546 133L547 127L551 125L553 122L557 123L560 126L557 134Z" fill="#6a6a6a"/><path d="M567 135L572 124V131L580 128V143H567Z" fill="#b8000f"/><circle cx="549.7" cy="139.5" r="5.8" fill="#fff"/><circle cx="561.9" cy="132.4" r="6.7" fill="#fff"/><rect x="550" y="138" width="21.7" height="14.8" fill="#fff"/><path d="M571 146L579.2 141V149.7L571 145Z" fill="#fff"/><rect x="546" y="153" width="29" height="3" fill="#6e1a2e"/></svg>
<div style="left:3px;top:556px;width:65px;height:218px;background:#121212;border-radius:6px"></div>
<div style="left:23px;top:565px;width:24px;height:1.3px;background:#9a9a9a;"></div>
<div style="left:23px;top:570px;width:24px;height:1.3px;background:#9a9a9a;"></div>
<div style="left:8px;top:580px;width:55px;height:30px;background:#3e3e3e;border-radius:5px 5px 0 0"></div>
<div style="left:8px;top:612px;width:55px;height:30px;background:#3b4f6b;border-radius:0"></div>
<div style="left:8px;top:644px;width:55px;height:29.5px;background:#3e3e3e;border-radius:0"></div>
<div style="left:8px;top:676px;width:55px;height:29.5px;background:#3e3e3e;border-radius:0"></div>
<div style="left:8px;top:708px;width:55px;height:29.5px;background:#3e3e3e;border-radius:0"></div>
<div style="left:8px;top:740px;width:55px;height:29px;background:#3e3e3e;border-radius:0 0 5px 5px"></div>
<svg style="position:absolute;left:24px;top:582px;" width="24" height="24" viewBox="0 0 24 24"><g stroke="#9c9c9c" stroke-linecap="round" stroke-width="3.6" fill="none"><path d="M7 12L6.5 3.5"/><path d="M11.4 12V2"/><path d="M15.6 12V3.2"/><path d="M18.5 13L20.3 7.5"/><path d="M7 16.5L2.2 11.5"/></g><path d="M5 11H20.2L19 17Q17 22 15.5 23H8Q5.5 19 5 16Z" fill="#9c9c9c"/></svg>
<svg style="position:absolute;left:23px;top:615px;" width="24" height="24" viewBox="0 0 24 24"><path d="M12 1.5V9.5M12 14.5V22.5M1.5 12H9.5M14.5 12H22.5" stroke="#d8d8d8" stroke-width="1.6"/><path d="M8.5 5L12 1.5L15.5 5M8.5 19L12 22.5L15.5 19M5 8.5L1.5 12L5 15.5M19 8.5L22.5 12L19 15.5" fill="none" stroke="#d8d8d8" stroke-width="1.6"/></svg>
<svg style="position:absolute;left:24px;top:644px;" width="23" height="27" viewBox="0 0 23 27"><path d="M11 5.2A9.8 9.8 0 0 0 6.2 23.5M11 24.8A9.8 9.8 0 0 0 15.8 6.5" fill="none" stroke="#c4c4c4" stroke-width="1.4"/><path d="M0.5 23.8H6.8V17M21.5 5.2H15.3V11.5" fill="none" stroke="#c4c4c4" stroke-width="1.4"/></svg>
<svg style="position:absolute;left:24px;top:680px;" width="22" height="22" viewBox="0 0 22 22"><rect x="1" y="1" width="19.5" height="19.5" fill="none" stroke="#c4c4c4" stroke-width="1.3"/><rect x="1" y="14" width="6.5" height="6.5" fill="none" stroke="#c4c4c4" stroke-width="1.3"/><path d="M9 12.5L17 4.5M11.5 4.5H17V10" fill="none" stroke="#c4c4c4" stroke-width="1.4"/></svg>
<svg style="position:absolute;left:24px;top:712px;" width="22" height="22" viewBox="0 0 22 22"><g fill="#c4c4c4"><rect x="1" y="1" width="4.5" height="4.5"/><rect x="16.5" y="1" width="4.5" height="4.5"/><rect x="1" y="16.5" width="4.5" height="4.5"/><rect x="16.5" y="16.5" width="4.5" height="4.5"/></g><path d="M8 3.2H14M8 18.8H14M3.2 8V14M18.8 8V14" stroke="#c4c4c4" stroke-width="1.3"/></svg>
<svg style="position:absolute;left:23px;top:743px;" width="24" height="24" viewBox="0 0 24 24"><circle cx="12" cy="12" r="8.5" fill="none" stroke="#c4c4c4" stroke-width="1.3" stroke-dasharray="8 3"/><path d="M12 5V19M5 12H19M9.5 7.5L12 5L14.5 7.5M9.5 16.5L12 19L14.5 16.5M7.5 9.5L5 12L7.5 14.5M16.5 9.5L19 12L16.5 14.5" fill="none" stroke="#c4c4c4" stroke-width="1.3"/><path d="M19 1H23V5ZM1 23V19L5 23Z" fill="#c4c4c4"/></svg>
<div style="left:0px;top:900px;width:1136px;height:28px;background:#1f1f1f;border-radius:5px 5px 0 0"></div>
<div style="left:0px;top:900px;width:132px;height:28px;background:#353535;border-radius:5px 5px 0 0"></div>
<svg style="position:absolute;left:11px;top:906px;" width="16" height="17" viewBox="0 0 16 17"><rect x="0.5" y="0.5" width="14" height="16" fill="#bdbdbd"/><path d="M2 4H12M2 7H13M2 10H10M2 13H13" stroke="#353535" stroke-width="1.3"/></svg>
<span class="t" style="left:35.0px;top:905.82px;font-size:18px;letter-spacing:0.667px;color:#b8b8b8;font-weight:normal;">Console</span>
<svg style="position:absolute;left:1112.5px;top:907px;" width="6" height="16" viewBox="0 0 6 16"><circle cx="3" cy="2.5" r="2" fill="#c4c4c4"/><circle cx="3" cy="8" r="2" fill="#c4c4c4"/><circle cx="3" cy="13.5" r="2" fill="#c4c4c4"/></svg>
<div style="left:0px;top:928px;width:1136px;height:32px;background:#363636;"></div>
<div style="left:0px;top:959px;width:1136px;height:1px;background:#232323;"></div>
<div style="left:0px;top:929px;width:1px;height:30px;background:#262626;"></div>
<div style="left:87px;top:929px;width:1px;height:30px;background:#262626;"></div>
<div style="left:180px;top:929px;width:1px;height:30px;background:#262626;"></div>
<div style="left:294px;top:929px;width:1px;height:30px;background:#262626;"></div>
<div style="left:372px;top:929px;width:1px;height:30px;background:#262626;"></div>
<div style="left:981px;top:929px;width:1px;height:30px;background:#262626;"></div>
<div style="left:1032px;top:929px;width:1px;height:30px;background:#262626;"></div>
<div style="left:1083px;top:929px;width:1px;height:30px;background:#262626;"></div>
<div style="left:1133px;top:929px;width:1px;height:30px;background:#262626;"></div>
<div style="left:61px;top:936px;width:1px;height:18px;background:#262626;"></div>
<span class="t" style="left:6.0px;top:935.82px;font-size:18px;letter-spacing:1.125px;color:#b8b8b8;font-weight:normal;">Clear</span>
<svg style="position:absolute;left:68.5px;top:941px;" width="11" height="6" viewBox="0 0 11 6"><path d="M0 0H11L5.5 6Z" fill="#c4c4c4"/></svg>
<span class="t" style="left:94.5px;top:935.82px;font-size:18px;letter-spacing:0.786px;color:#b8b8b8;font-weight:normal;">Collapse</span>
<span class="t" style="left:186.5px;top:935.82px;font-size:18px;letter-spacing:0.1px;color:#b8b8b8;font-weight:normal;">Error Pause</span>
<span class="t" style="left:300.0px;top:935.82px;font-size:18px;letter-spacing:0.6px;color:#b8b8b8;font-weight:normal;">Editor</span>
<svg style="position:absolute;left:354.5px;top:941px;" width="11" height="6" viewBox="0 0 11 6"><path d="M0 0H11L5.5 6Z" fill="#c4c4c4"/></svg>
<div style="left:528px;top:932px;width:450px;height:24px;background:#232323;border-radius:6px;border:1px solid #1a1a1a"></div>
<svg style="position:absolute;left:535px;top:938px;" width="12" height="12" viewBox="0 0 12 12"><circle cx="4.5" cy="4.5" r="3.3" fill="none" stroke="#bdbdbd" stroke-width="1.6"/><path d="M7 7L11 11" stroke="#bdbdbd" stroke-width="2"/></svg>
<div style="left:982px;top:929px;width:50px;height:30px;background:#3b3b3b;"></div>
<div style="left:1033px;top:929px;width:50px;height:30px;background:#3b3b3b;"></div>
<div style="left:1084px;top:929px;width:49px;height:30px;background:#3b3b3b;"></div>
<svg style="position:absolute;left:989px;top:934px;" width="21" height="21" viewBox="0 0 21 21"><path d="M10 1A9 9 0 1 0 10 19L16 20L15 16.5A9 9 0 0 0 10 1Z" fill="#6e6e6e"/><rect x="8.7" y="4" width="2.6" height="8" fill="#3b3b3b"/><rect x="8.7" y="13.5" width="2.6" height="2.6" fill="#3b3b3b"/></svg>
<span class="t" style="left:1014.0px;top:935.82px;font-size:18px;letter-spacing:0px;color:#b8b8b8;font-weight:normal;">0</span>
<svg style="position:absolute;left:1040px;top:934px;" width="21" height="20" viewBox="0 0 21 20"><path d="M10.5 0.5L20.5 19.5H0.5Z" fill="#6e6e6e"/><rect x="9.3" y="6" width="2.4" height="7.5" fill="#3b3b3b"/><rect x="9.3" y="15" width="2.4" height="2.4" fill="#3b3b3b"/></svg>
<span class="t" style="left:1065.0px;top:935.82px;font-size:18px;letter-spacing:0px;color:#b8b8b8;font-weight:normal;">0</span>
<svg style="position:absolute;left:1091px;top:934px;" width="21" height="21" viewBox="0 0 21 21"><path d="M6 0.5H14L19.5 6V14L14 19.5H6L0.5 14V6Z" fill="#bdbdbd"/><rect x="8.7" y="4" width="2.6" height="8" fill="#3b3b3b"/><rect x="8.7" y="13.5" width="2.6" height="2.6" fill="#3b3b3b"/></svg>
<span class="t" style="left:1116.0px;top:935.82px;font-size:18px;letter-spacing:0px;color:#b8b8b8;font-weight:normal;">0</span>
<div style="left:0px;top:960px;width:1136px;height:87px;background:#2e2e2e;"></div>
<div style="left:1138px;top:109px;width:354px;height:29px;background:#1f1f1f;border-radius:5px 5px 0 0"></div>
<div style="left:1138px;top:109px;width:147px;height:29px;background:#353535;border-radius:5px 5px 0 0"></div>
<svg style="position:absolute;left:1151px;top:117px;" width="16" height="14" viewBox="0 0 16 14"><g fill="#c4c4c4"><circle cx="1.7" cy="1.7" r="1.5"/><circle cx="4.5" cy="7" r="1.5"/><circle cx="4.5" cy="12" r="1.5"/></g><path d="M4 1.7H15.5M7.5 7H15.5M7.5 12H15.5" stroke="#c4c4c4" stroke-width="1.2"/></svg>
<span class="t" style="left:1174.5px;top:115.82px;font-size:18px;letter-spacing:0.812px;color:#b8b8b8;font-weight:normal;">Hierarchy</span>
<svg style="position:absolute;left:1440px;top:116px;" width="13" height="16" viewBox="0 0 13 16"><path d="M2.5 7V4.5A4 4 0 0 1 10.5 4.5" fill="none" stroke="#c4c4c4" stroke-width="1.6"/><rect x="0.8" y="8" width="11.4" height="7.2" fill="none" stroke="#c4c4c4" stroke-width="1.6"/></svg>
<svg style="position:absolute;left:1469px;top:116px;" width="6" height="16" viewBox="0 0 6 16"><circle cx="3" cy="2.5" r="2" fill="#c4c4c4"/><circle cx="3" cy="8" r="2" fill="#c4c4c4"/><circle cx="3" cy="13.5" r="2" fill="#c4c4c4"/></svg>
<div style="left:1138px;top:138px;width:354px;height:31px;background:#363636;"></div>
<div style="left:1138px;top:168px;width:354px;height:1px;background:#232323;"></div>
<svg style="position:absolute;left:1148.5px;top:143.5px;" width="19" height="19" viewBox="0 0 19 19"><path d="M9.5 0.5V18.5M0.5 9.5H18.5" stroke="#c4c4c4" stroke-width="1.8"/></svg>
<svg style="position:absolute;left:1174px;top:150px;" width="10" height="6" viewBox="0 0 10 6"><path d="M0 0H10L5.0 6Z" fill="#c4c4c4"/></svg>
<div style="left:1204px;top:141px;width:255px;height:24px;background:#232323;border-radius:7px 0 0 7px"></div>
<div style="left:1204px;top:141px;width:255px;height:1.5px;background:#111;"></div>
<svg style="position:absolute;left:1210px;top:146px;" width="16" height="14" viewBox="0 0 16 14"><circle cx="5" cy="5" r="3.6" fill="none" stroke="#bdbdbd" stroke-width="1.5"/><path d="M7.5 7.5L11 11" stroke="#bdbdbd" stroke-width="1.8"/><path d="M11 4H15L13 6.5Z" fill="#bdbdbd"/></svg>
<span class="t" style="left:1232.0px;top:144.72px;font-size:18px;letter-spacing:0.0px;color:#7a7a7a;font-weight:normal;">All</span>
<div style="left:1460px;top:141px;width:26px;height:24px;background:#2a2a2a;border-radius:0 7px 7px 0"></div>
<svg style="position:absolute;left:1463px;top:143px;" width="20" height="20" viewBox="0 0 20 20"><rect x="6" y="1" width="13" height="13" rx="2.5" fill="none" stroke="#c4c4c4" stroke-width="1.3"/><rect x="1" y="13" width="7" height="6" fill="#353535" stroke="#c4c4c4" stroke-width="1.3"/><path d="M7 12L14 5M10 5H14V9" fill="none" stroke="#c4c4c4" stroke-width="1.3"/></svg>
<div style="left:1138px;top:169px;width:354px;height:268px;background:#2b2b2b;"></div>
<div style="left:1139px;top:169px;width:48px;height:268px;background:#232323;"></div>
<div style="left:1473px;top:193px;width:19px;height:244px;background:#2b2b2b;"></div>
<div style="left:1139px;top:170px;width:334px;height:23px;background:#414141;"></div>
<svg style="position:absolute;left:1141px;top:176px;" width="21" height="17" viewBox="0 0 21 17"><path d="M1 8Q10.5 -1 20 8Q10.5 16 1 8Z" fill="none" stroke="#8a8a8a" stroke-width="1.6"/><circle cx="10.5" cy="7" r="4.2" fill="#8a8a8a"/><rect x="15" y="11" width="6" height="6" rx="1" fill="#8a8a8a"/></svg>
<svg style="position:absolute;left:1190px;top:177px;" width="12" height="12" viewBox="0 0 12 12"><path d="M0 0H12L6.0 12Z" fill="#6e6e6e"/></svg>
<svg style="position:absolute;left:1210px;top:172px;" width="20" height="21" viewBox="0 0 20 21"><path d="M10 0.5L18.5 5.5V15.5L10 20.5L1.5 15.5V5.5Z" fill="#dcdcdc"/><path d="M10 4V11M10 11L4 15M10 11L16 15" stroke="#414141" stroke-width="2.4"/><path d="M4 6.5L7.5 4.5M16 6.5L12.5 4.5M6 17.5L10 19.5L14 17.5" stroke="#414141" stroke-width="1.6"/><rect x="8.2" y="9.5" width="3.6" height="3.6" fill="#dcdcdc"/></svg>
<span class="t" style="left:1236.0px;top:171.72px;font-size:18px;letter-spacing:0.727px;color:#d0d0d0;font-weight:bold;">SampleScene*</span>
<svg style="position:absolute;left:1450.5px;top:174px;" width="6" height="16" viewBox="0 0 6 16"><circle cx="3" cy="2.5" r="2" fill="#c4c4c4"/><circle cx="3" cy="8" r="2" fill="#c4c4c4"/><circle cx="3" cy="13.5" r="2" fill="#c4c4c4"/></svg>
<div style="left:1139px;top:290px;width:334px;height:23.5px;background:#3e3e3e;"></div>
<div style="left:1139px;top:290px;width:48px;height:23.5px;background:#353535;"></div>
<svg style="position:absolute;left:1230.5px;top:195.5px;" width="20" height="20" viewBox="0 0 20 20"><g transform="scale(1.0)"><path d="M10 1L19 5.5V14.5L10 19L1 14.5V5.5Z M1 5.5L10 10L19 5.5 M10 10V19" fill="none" stroke="#b8b8b8" stroke-width="1.3" stroke-linejoin="round"/></g></svg>
<span class="t" style="left:1256.5px;top:196.32px;font-size:18px;letter-spacing:0.675px;color:#b8b8b8;font-weight:normal;">Main Camera</span>
<svg style="position:absolute;left:1211.5px;top:224px;" width="12" height="11" viewBox="0 0 12 11"><path d="M0 0H12L6.0 11Z" fill="#6a6a6a"/></svg>
<svg style="position:absolute;left:1230.5px;top:219.5px;" width="20" height="20" viewBox="0 0 20 20"><g transform="scale(1.0)"><path d="M10 1L19 5.5V14.5L10 19L1 14.5V5.5Z M1 5.5L10 10L19 5.5 M10 10V19" fill="none" stroke="#b8b8b8" stroke-width="1.3" stroke-linejoin="round"/></g></svg>
<span class="t" style="left:1256.5px;top:220.32px;font-size:18px;letter-spacing:0.2px;color:#b8b8b8;font-weight:normal;">Grid</span>
<svg style="position:absolute;left:1251.5px;top:243.5px;" width="20" height="20" viewBox="0 0 20 20"><g transform="scale(1.0)"><path d="M10 1L19 5.5V14.5L10 19L1 14.5V5.5Z M1 5.5L10 10L19 5.5 M10 10V19" fill="none" stroke="#b8b8b8" stroke-width="1.3" stroke-linejoin="round"/></g></svg>
<span class="t" style="left:1277.5px;top:244.32px;font-size:18px;letter-spacing:0.892px;color:#b8b8b8;font-weight:normal;">Tilemap</span>
<svg style="position:absolute;left:1211.5px;top:272px;" width="12" height="11" viewBox="0 0 12 11"><path d="M0 0H12L6.0 11Z" fill="#6a6a6a"/></svg>
<svg style="position:absolute;left:1230.5px;top:267.5px;" width="20" height="20" viewBox="0 0 20 20"><g transform="scale(1.0)"><path d="M10 1L19 5.5V14.5L10 19L1 14.5V5.5Z M1 5.5L10 10L19 5.5 M10 10V19" fill="none" stroke="#b8b8b8" stroke-width="1.3" stroke-linejoin="round"/></g></svg>
<span class="t" style="left:1256.5px;top:268.32px;font-size:18px;letter-spacing:0.8px;color:#b8b8b8;font-weight:normal;">Player</span>
<svg style="position:absolute;left:1251.5px;top:291.5px;" width="20" height="20" viewBox="0 0 20 20"><g transform="scale(1.0)"><path d="M10 1L19 5.5V14.5L10 19L1 14.5V5.5Z M1 5.5L10 10L19 5.5 M10 10V19" fill="none" stroke="#b8b8b8" stroke-width="1.3" stroke-linejoin="round"/></g></svg>
<span class="t" style="left:1277.5px;top:292.32px;font-size:18px;letter-spacing:-0.1px;color:#b8b8b8;font-weight:normal;">Aim</span>
<svg style="position:absolute;left:1230.5px;top:315.5px;" width="20" height="20" viewBox="0 0 20 20"><g transform="scale(1.0)"><path d="M10 1L19 5.5V14.5L10 19L1 14.5V5.5Z M1 5.5L10 10L19 5.5 M10 10V19" fill="none" stroke="#b8b8b8" stroke-width="1.3" stroke-linejoin="round"/></g></svg>
<span class="t" style="left:1256.5px;top:316.32px;font-size:18px;letter-spacing:0.714px;color:#b8b8b8;font-weight:normal;">CM vcam1</span>
<svg style="position:absolute;left:1230.5px;top:339.5px;" width="20" height="20" viewBox="0 0 20 20"><g transform="scale(1.0)"><path d="M10 1L19 5.5V14.5L10 19L1 14.5V5.5Z M1 5.5L10 10L19 5.5 M10 10V19" fill="none" stroke="#b8b8b8" stroke-width="1.3" stroke-linejoin="round"/></g></svg>
<span class="t" style="left:1256.5px;top:340.32px;font-size:18px;letter-spacing:0.75px;color:#b8b8b8;font-weight:normal;">Bullet(Clone)</span>
<svg style="position:absolute;left:1230.5px;top:363.5px;" width="20" height="20" viewBox="0 0 20 20"><g transform="scale(1.0)"><path d="M10 1L19 5.5V14.5L10 19L1 14.5V5.5Z M1 5.5L10 10L19 5.5 M10 10V19" fill="none" stroke="#b8b8b8" stroke-width="1.3" stroke-linejoin="round"/></g></svg>
<span class="t" style="left:1256.5px;top:364.32px;font-size:18px;letter-spacing:0.75px;color:#b8b8b8;font-weight:normal;">Bullet(Clone)</span>
<svg style="position:absolute;left:1230.5px;top:387.5px;" width="20" height="20" viewBox="0 0 20 20"><g transform="scale(1.0)"><path d="M10 1L19 5.5V14.5L10 19L1 14.5V5.5Z M1 5.5L10 10L19 5.5 M10 10V19" fill="none" stroke="#b8b8b8" stroke-width="1.3" stroke-linejoin="round"/></g></svg>
<span class="t" style="left:1256.5px;top:388.32px;font-size:18px;letter-spacing:0.75px;color:#b8b8b8;font-weight:normal;">Bullet(Clone)</span>
<svg style="position:absolute;left:1230.5px;top:411.5px;" width="20" height="20" viewBox="0 0 20 20"><g transform="scale(1.0)"><path d="M10 1L19 5.5V14.5L10 19L1 14.5V5.5Z M1 5.5L10 10L19 5.5 M10 10V19" fill="none" stroke="#b8b8b8" stroke-width="1.3" stroke-linejoin="round"/></g></svg>
<span class="t" style="left:1256.5px;top:412.32px;font-size:18px;letter-spacing:0.75px;color:#b8b8b8;font-weight:normal;">Bullet(Clone)</span>
<svg style="position:absolute;left:1230.5px;top:435.5px;" width="20" height="20" viewBox="0 0 20 20"><g transform="scale(1.0)"><path d="M10 1L19 5.5V14.5L10 19L1 14.5V5.5Z M1 5.5L10 10L19 5.5 M10 10V19" fill="none" stroke="#b8b8b8" stroke-width="1.3" stroke-linejoin="round"/></g></svg>
<span class="t" style="left:1256.5px;top:436.32px;font-size:18px;letter-spacing:0.75px;color:#b8b8b8;font-weight:normal;">Bullet(Clone)</span>
<svg style="position:absolute;left:1420px;top:193px;" width="30" height="25" viewBox="0 0 30 25"><g transform="translate(13.5 11)"><circle r="6.3" fill="#5e5e5e"/><g fill="#5e5e5e"><rect x="-1.7" y="-8.3" width="3.4" height="16.6"/><rect x="-8.3" y="-1.7" width="16.6" height="3.4"/><rect x="-1.7" y="-8.3" width="3.4" height="16.6" transform="rotate(45)"/><rect x="-1.7" y="-8.3" width="3.4" height="16.6" transform="rotate(-45)"/></g><circle r="3" fill="#5e5e5e" stroke="#222" stroke-width="1.3"/></g><path d="M7.8 22L23 4V10.3H27.5V17H23.6V22Z" fill="#960000" stroke="#2a0505" stroke-width="1"/></svg>
<svg style="position:absolute;left:1140px;top:220px;" width="22" height="18" viewBox="0 0 22 18"><path d="M1 10Q11 0 21 10Q11 19 1 10Z" fill="none" stroke="#8a8a8a" stroke-width="1.6"/><path d="M7 12A4 4 0 0 1 14 7Z" fill="#8a8a8a"/><path d="M2 17L19 1" stroke="#8a8a8a" stroke-width="1.8"/></svg>
<svg style="position:absolute;left:1140px;top:244px;" width="22" height="18" viewBox="0 0 22 18"><path d="M1 10Q11 0 21 10Q11 19 1 10Z" fill="none" stroke="#8a8a8a" stroke-width="1.6"/><path d="M7 12A4 4 0 0 1 14 7Z" fill="#8a8a8a"/><path d="M2 17L19 1" stroke="#8a8a8a" stroke-width="1.8"/></svg>
<svg style="position:absolute;left:1476px;top:178px;" width="13" height="8" viewBox="0 0 13 8"><path d="M0.5 7.5L6.5 0.5L12.5 7.5Z" fill="#c4c4c4"/></svg>
<div style="left:1475px;top:193px;width:16px;height:29px;background:#4f4f4f;border-radius:8px"></div>
<svg style="position:absolute;left:1476px;top:422px;" width="13" height="8" viewBox="0 0 13 8"><path d="M0.5 0.5L6.5 7.5L12.5 0.5Z" fill="#c4c4c4"/></svg>
<div style="left:1136px;top:437px;width:360px;height:3px;background:#121212;"></div>
<div style="left:1139px;top:440px;width:353px;height:29px;background:#1f1f1f;border-radius:5px 5px 0 0"></div>
<div style="left:1139px;top:440px;width:122px;height:29px;background:#353535;border-radius:5px 5px 0 0"></div>
<svg style="position:absolute;left:1149.5px;top:448px;" width="19" height="16" viewBox="0 0 19 16"><path d="M0.5 1H7L9 3.5H18.5V15H0.5Z" fill="#c4c4c4"/></svg>
<span class="t" style="left:1174.5px;top:446.82px;font-size:18px;letter-spacing:0.917px;color:#b8b8b8;font-weight:normal;">Project</span>
<svg style="position:absolute;left:1440px;top:447px;" width="13" height="16" viewBox="0 0 13 16"><path d="M2.5 7V4.5A4 4 0 0 1 10.5 4.5" fill="none" stroke="#c4c4c4" stroke-width="1.6"/><rect x="0.8" y="8" width="11.4" height="7.2" fill="none" stroke="#c4c4c4" stroke-width="1.6"/></svg>
<svg style="position:absolute;left:1468.5px;top:447px;" width="6" height="16" viewBox="0 0 6 16"><circle cx="3" cy="2.5" r="2" fill="#c4c4c4"/><circle cx="3" cy="8" r="2" fill="#c4c4c4"/><circle cx="3" cy="13.5" r="2" fill="#c4c4c4"/></svg>
<div style="left:1139px;top:469px;width:353px;height:31px;background:#363636;"></div>
<div style="left:1139px;top:499px;width:353px;height:1px;background:#232323;"></div>
<svg style="position:absolute;left:1149px;top:474.5px;" width="19" height="19" viewBox="0 0 19 19"><path d="M9.5 0.5V18.5M0.5 9.5H18.5" stroke="#c4c4c4" stroke-width="1.8"/></svg>
<svg style="position:absolute;left:1174px;top:481px;" width="10" height="6" viewBox="0 0 10 6"><path d="M0 0H10L5.0 6Z" fill="#c4c4c4"/></svg>
<div style="left:1206px;top:472px;width:152px;height:24px;background:#232323;border-radius:7px"></div>
<div style="left:1206px;top:472px;width:125px;height:1.5px;background:#111;"></div>
<svg style="position:absolute;left:1213px;top:477px;" width="14" height="14" viewBox="0 0 14 14"><circle cx="5" cy="5" r="3.6" fill="none" stroke="#bdbdbd" stroke-width="1.5"/><path d="M7.5 7.5L11 11" stroke="#bdbdbd" stroke-width="1.8"/></svg>
<div style="left:1331px;top:473px;width:26px;height:22px;background:#2a2a2a;border-radius:0 7px 7px 0"></div>
<svg style="position:absolute;left:1334px;top:474px;" width="20" height="20" viewBox="0 0 20 20"><rect x="6" y="1" width="13" height="13" rx="2.5" fill="none" stroke="#c4c4c4" stroke-width="1.3"/><rect x="1" y="13" width="7" height="6" fill="#353535" stroke="#c4c4c4" stroke-width="1.3"/><path d="M7 12L14 5M10 5H14V9" fill="none" stroke="#c4c4c4" stroke-width="1.3"/></svg>
<div style="left:1362px;top:470px;width:1px;height:29px;background:#262626;"></div>
<div style="left:1400px;top:470px;width:1px;height:29px;background:#262626;"></div>
<div style="left:1439px;top:470px;width:1px;height:29px;background:#262626;"></div>
<svg style="position:absolute;left:1370px;top:475px;" width="20" height="20" viewBox="0 0 20 20"><rect x="2" y="0.5" width="7" height="8" fill="#c4c4c4"/><circle cx="5.5" cy="14" r="5.5" fill="#c4c4c4"/><path d="M12 2L19.5 15H8Z" fill="#c4c4c4"/></svg>
<svg style="position:absolute;left:1409px;top:475px;" width="18" height="18" viewBox="0 0 18 18"><path d="M9 1H16.5V8.5L8 17L1 10Z" fill="#c4c4c4"/><circle cx="13" cy="4.5" r="1.6" fill="#363636"/></svg>
<svg style="position:absolute;left:1447px;top:475px;" width="24" height="19" viewBox="0 0 24 19"><path d="M1 10Q12 0 23 10Q12 19 1 10Z" fill="none" stroke="#c4c4c4" stroke-width="1.6"/><path d="M8 12A4.5 4.5 0 0 1 16 7Z" fill="#c4c4c4"/><path d="M3 18L21 1" stroke="#c4c4c4" stroke-width="1.8"/></svg>
<span class="t" style="left:1472.0px;top:475.72px;font-size:18px;letter-spacing:0px;color:#b8b8b8;font-weight:normal;">5</span>
<div style="left:1139px;top:500px;width:353px;height:517px;background:#2e2e2e;"></div>
<div style="left:1139px;top:1017px;width:353px;height:30px;background:#353535;"></div>
<svg style="position:absolute;left:1146px;top:513px;" width="12" height="11" viewBox="0 0 12 11"><path d="M0 0H12L6.0 11Z" fill="#6a6a6a"/></svg>
<svg style="position:absolute;left:1166px;top:510px;" width="21" height="16" viewBox="0 0 21 16"><path d="M0.7 15V1H7L9 3.5H16.5V6.5" fill="none" stroke="#c4c4c4" stroke-width="1.4"/><path d="M4.5 6.5H20.8L16.5 15.5H0.5Z" fill="#c4c4c4"/></svg>
<span class="t" style="left:1192.0px;top:508.52px;font-size:18px;letter-spacing:0.9px;color:#d0d0d0;font-weight:bold;">Assets</span>
<svg style="position:absolute;left:1168px;top:535.2px;" width="11" height="12" viewBox="0 0 11 12"><path d="M0 0L11 6.0L0 12Z" fill="#6a6a6a"/></svg>
<svg style="position:absolute;left:1187px;top:533.2px;" width="19" height="16" viewBox="0 0 19 16"><path d="M0.5 1H7L9 3.5H18.5V15H0.5Z" fill="#c4c4c4"/></svg>
<span class="t" style="left:1211.5px;top:532.52px;font-size:18px;letter-spacing:0.75px;color:#b8b8b8;font-weight:normal;">CryptCreepers</span>
<svg style="position:absolute;left:1168px;top:559.2px;" width="11" height="12" viewBox="0 0 11 12"><path d="M0 0L11 6.0L0 12Z" fill="#6a6a6a"/></svg>
<svg style="position:absolute;left:1187px;top:557.2px;" width="19" height="16" viewBox="0 0 19 16"><path d="M0.5 1H7L9 3.5H18.5V15H0.5Z" fill="#c4c4c4"/></svg>
<span class="t" style="left:1211.5px;top:556.52px;font-size:18px;letter-spacing:-0.167px;color:#b8b8b8;font-weight:normal;">Paletts</span>
<svg style="position:absolute;left:1167px;top:584.2px;" width="12" height="11" viewBox="0 0 12 11"><path d="M0 0H12L6.0 11Z" fill="#6a6a6a"/></svg>
<svg style="position:absolute;left:1187px;top:581.2px;" width="21" height="16" viewBox="0 0 21 16"><path d="M0.7 15V1H7L9 3.5H16.5V6.5" fill="none" stroke="#c4c4c4" stroke-width="1.4"/><path d="M4.5 6.5H20.8L16.5 15.5H0.5Z" fill="#c4c4c4"/></svg>
<span class="t" style="left:1211.5px;top:580.52px;font-size:18px;letter-spacing:0.75px;color:#b8b8b8;font-weight:normal;">Prefabs</span>
<svg style="position:absolute;left:1168px;top:631.2px;" width="11" height="12" viewBox="0 0 11 12"><path d="M0 0L11 6.0L0 12Z" fill="#6a6a6a"/></svg>
<svg style="position:absolute;left:1187px;top:629.2px;" width="19" height="16" viewBox="0 0 19 16"><path d="M0.5 1H7L9 3.5H18.5V15H0.5Z" fill="#c4c4c4"/></svg>
<span class="t" style="left:1211.5px;top:628.52px;font-size:18px;letter-spacing:0.8px;color:#b8b8b8;font-weight:normal;">Scenes</span>
<svg style="position:absolute;left:1167px;top:656.2px;" width="12" height="11" viewBox="0 0 12 11"><path d="M0 0H12L6.0 11Z" fill="#6a6a6a"/></svg>
<svg style="position:absolute;left:1187px;top:653.2px;" width="21" height="16" viewBox="0 0 21 16"><path d="M0.7 15V1H7L9 3.5H16.5V6.5" fill="none" stroke="#c4c4c4" stroke-width="1.4"/><path d="M4.5 6.5H20.8L16.5 15.5H0.5Z" fill="#c4c4c4"/></svg>
<span class="t" style="left:1211.5px;top:652.52px;font-size:18px;letter-spacing:0.75px;color:#b8b8b8;font-weight:normal;">Scripts</span>
<svg style="position:absolute;left:1168px;top:727.2px;" width="11" height="12" viewBox="0 0 11 12"><path d="M0 0L11 6.0L0 12Z" fill="#6a6a6a"/></svg>
<svg style="position:absolute;left:1187px;top:725.2px;" width="19" height="16" viewBox="0 0 19 16"><path d="M0.5 1H7L9 3.5H18.5V15H0.5Z" fill="#c4c4c4"/></svg>
<span class="t" style="left:1211.5px;top:724.52px;font-size:18px;letter-spacing:1.062px;color:#b8b8b8;font-weight:normal;">Tiles</span>
<svg style="position:absolute;left:1206px;top:604px;" width="22" height="21" viewBox="0 0 22 21"><path d="M11 1L20.5 5.5V15.5L11 20L1.5 15.5V5.5Z" fill="#5aa9db"/><path d="M1.5 5.5L11 10L20.5 5.5M11 10V20" fill="none" stroke="#2e2e2e" stroke-width="1.5"/><path d="M11 1L20.5 5.5L11 10L1.5 5.5Z" fill="#9fd4f2"/></svg>
<span class="t" style="left:1232.5px;top:604.52px;font-size:18px;letter-spacing:0.9px;color:#b8b8b8;font-weight:normal;">Bullet</span>
<svg style="position:absolute;left:1208px;top:674.7px;" width="19" height="22" viewBox="0 0 19 22"><path d="M0.5 0.5H13L18.5 6V21.5H0.5Z" fill="#d8d8d8"/><path d="M13 0.5V6H18.5" fill="#a8a8a8"/><path d="M7 6L5 18M12 6L10 18M3.5 10H15M3 14H14.5" stroke="#2d7a3a" stroke-width="1.8"/></svg>
<span class="t" style="left:1232.5px;top:676.52px;font-size:18px;letter-spacing:0.9px;color:#b8b8b8;font-weight:normal;">Bullet</span>
<svg style="position:absolute;left:1208px;top:698.7px;" width="19" height="22" viewBox="0 0 19 22"><path d="M0.5 0.5H13L18.5 6V21.5H0.5Z" fill="#d8d8d8"/><path d="M13 0.5V6H18.5" fill="#a8a8a8"/><path d="M7 6L5 18M12 6L10 18M3.5 10H15M3 14H14.5" stroke="#2d7a3a" stroke-width="1.8"/></svg>
<span class="t" style="left:1232.5px;top:700.52px;font-size:18px;letter-spacing:0.8px;color:#b8b8b8;font-weight:normal;">Player</span>
<svg style="position:absolute;left:1146px;top:752px;" width="11" height="12" viewBox="0 0 11 12"><path d="M0 0L11 6.0L0 12Z" fill="#6a6a6a"/></svg>
<svg style="position:absolute;left:1166px;top:750px;" width="19" height="16" viewBox="0 0 19 16"><path d="M0.5 1H7L9 3.5H18.5V15H0.5Z" fill="#c4c4c4"/></svg>
<span class="t" style="left:1192.0px;top:748.52px;font-size:18px;letter-spacing:0.571px;color:#d0d0d0;font-weight:bold;">Packages</span>
<div style="left:1494px;top:109px;width:426px;height:29px;background:#1f1f1f;border-radius:5px 5px 0 0"></div>
<div style="left:1494px;top:109px;width:142px;height:29px;background:#353535;border-radius:5px 5px 0 0"></div>
<svg style="position:absolute;left:1508px;top:117px;" width="15" height="15" viewBox="0 0 15 15"><circle cx="7.5" cy="7.5" r="7.2" fill="#c4c4c4"/><rect x="6.2" y="6.2" width="3" height="6" fill="#353535"/><circle cx="7.7" cy="3.7" r="1.5" fill="#353535"/></svg>
<span class="t" style="left:1530.5px;top:115.82px;font-size:18px;letter-spacing:0.875px;color:#b8b8b8;font-weight:normal;">Inspector</span>
<svg style="position:absolute;left:1866px;top:116px;" width="13" height="16" viewBox="0 0 13 16"><path d="M2.5 7V4.5A4 4 0 0 1 10.5 4.5" fill="none" stroke="#c4c4c4" stroke-width="1.6"/><rect x="0.8" y="8" width="11.4" height="7.2" fill="none" stroke="#c4c4c4" stroke-width="1.6"/></svg>
<svg style="position:absolute;left:1895.5px;top:116px;" width="6" height="16" viewBox="0 0 6 16"><circle cx="3" cy="2.5" r="2" fill="#c4c4c4"/><circle cx="3" cy="8" r="2" fill="#c4c4c4"/><circle cx="3" cy="13.5" r="2" fill="#c4c4c4"/></svg>
<div style="left:1493px;top:138px;width:2px;height:909px;background:#1a1a1a;"></div>
<div style="left:1495px;top:138px;width:425px;height:909px;background:#2c2c2c;"></div>
<div style="left:1495px;top:138px;width:425px;height:1.5px;background:#1a1a1a;"></div>
<div style="left:1495px;top:139px;width:425px;height:88px;background:#303030;"></div>
<svg style="position:absolute;left:1505px;top:154px;" width="31" height="31" viewBox="0 0 31 31"><g transform="scale(1.55)"><path d="M10 1L19 5.5V14.5L10 19L1 14.5V5.5Z M1 5.5L10 10L19 5.5 M10 10V19" fill="none" stroke="#b8b8b8" stroke-width="1.2" stroke-linejoin="round"/></g></svg>
<svg style="position:absolute;left:1535px;top:185px;" width="11" height="6" viewBox="0 0 11 6"><path d="M0 0H11L5.5 6Z" fill="#c4c4c4"/></svg>
<div style="left:1564px;top:155px;width:21px;height:21px;background:#232323;border-radius:3px"></div>
<svg style="position:absolute;left:1568px;top:160px;" width="13" height="11" viewBox="0 0 13 11"><path d="M1 5.5L4.5 9L12 1.5" fill="none" stroke="#d8d8d8" stroke-width="2"/></svg>
<div style="left:1594px;top:152px;width:203px;height:27px;background:#232323;border-radius:4px;border:1px solid #191919;"></div>
<span class="t" style="left:1598.6px;top:156.82px;font-size:18px;letter-spacing:0.0px;color:#d8d8d8;font-weight:bold;">Aim</span>
<div style="left:1802px;top:155px;width:21px;height:21px;background:#232323;border-radius:3px"></div>
<span class="t" style="left:1829.5px;top:156.82px;font-size:18px;letter-spacing:0.8px;color:#b8b8b8;font-weight:normal;">Static</span>
<svg style="position:absolute;left:1898.5px;top:162px;" width="11" height="6" viewBox="0 0 11 6"><path d="M0 0H11L5.5 6Z" fill="#c4c4c4"/></svg>
<span class="t" style="left:1558.5px;top:192.82px;font-size:18px;letter-spacing:2.0px;color:#b8b8b8;font-weight:normal;">Tag</span>
<div style="left:1597.5px;top:189px;width:127.0px;height:25px;background:#414141;border-radius:4px;border:1px solid #2c2c2c;"></div>
<span class="t" style="left:1603.5px;top:192.82px;font-size:18px;letter-spacing:0.143px;color:#b8b8b8;font-weight:normal;">Untagged</span>
<svg style="position:absolute;left:1705.5px;top:198.5px;" width="11" height="6" viewBox="0 0 11 6"><path d="M0 0H11L5.5 6Z" fill="#c4c4c4"/></svg>
<span class="t" style="left:1745.0px;top:192.82px;font-size:18px;letter-spacing:1.25px;color:#b8b8b8;font-weight:normal;">Layer</span>
<div style="left:1802.5px;top:189px;width:109.5px;height:25px;background:#414141;border-radius:4px;border:1px solid #2c2c2c;"></div>
<span class="t" style="left:1808.5px;top:192.82px;font-size:18px;letter-spacing:0.833px;color:#b8b8b8;font-weight:normal;">Default</span>
<svg style="position:absolute;left:1892.5px;top:198.5px;" width="11" height="6" viewBox="0 0 11 6"><path d="M0 0H11L5.5 6Z" fill="#c4c4c4"/></svg>
<div style="left:1495px;top:227px;width:425px;height:1.5px;background:#1a1a1a;"></div>
<div style="left:1495px;top:228.5px;width:425px;height:30px;background:#323232;"></div>
<svg style="position:absolute;left:1504px;top:238px;" width="12" height="11" viewBox="0 0 12 11"><path d="M0 0H12L6.0 11Z" fill="#6a6a6a"/></svg>
<svg style="position:absolute;left:1527px;top:229px;" width="21" height="20" viewBox="0 0 21 20"><path d="M10.5 2V8" stroke="#7ccb3a" stroke-width="3.4" stroke-linecap="round"/><path d="M7.5 12.8L3 15.5" stroke="#4aa3d8" stroke-width="3.4" stroke-linecap="round"/><path d="M13.5 12.8L18 15.5" stroke="#d8603a" stroke-width="3.4" stroke-linecap="round"/></svg>
<span class="t" style="left:1585.5px;top:234.82px;font-size:18px;letter-spacing:0.875px;color:#d0d0d0;font-weight:bold;">Transform</span>
<svg style="position:absolute;left:1832.5px;top:236px;" width="15" height="15" viewBox="0 0 15 15"><circle cx="7.5" cy="7.5" r="7.2" fill="#c4c4c4"/><path d="M5 5.8A2.5 2.5 0 1 1 8.5 8C7.8 8.4 7.5 8.8 7.5 9.6" fill="none" stroke="#2e2e2e" stroke-width="1.8"/><rect x="6.5" y="10.6" width="2" height="2" fill="#2e2e2e"/></svg>
<svg style="position:absolute;left:1862px;top:236px;" width="16" height="16" viewBox="0 0 16 16"><path d="M0.5 4H15.5M0.5 11H15.5" stroke="#c4c4c4" stroke-width="1.4"/><path d="M5 1V7M11 8V14M8 11V15.5" stroke="#c4c4c4" stroke-width="1.8"/></svg>
<svg style="position:absolute;left:1896px;top:236px;" width="6" height="16" viewBox="0 0 6 16"><circle cx="3" cy="2.5" r="2" fill="#c4c4c4"/><circle cx="3" cy="8" r="2" fill="#c4c4c4"/><circle cx="3" cy="13.5" r="2" fill="#c4c4c4"/></svg>
<span class="t" style="left:1523.5px;top:270.82px;font-size:18px;letter-spacing:0.857px;color:#b8b8b8;font-weight:normal;">Position</span>
<span class="t" style="left:1635.5px;top:270.82px;font-size:18px;letter-spacing:0px;color:#b8b8b8;font-weight:normal;">X</span>
<div style="left:1657.5px;top:267.0px;width:65.0px;height:25.0px;background:#232323;border-radius:3px;border:1px solid #191919;"></div>
<span class="t" style="left:1661.5px;top:270.82px;font-size:18px;letter-spacing:1.2px;color:#b8b8b8;font-weight:normal;">0.8814</span>
<span class="t" style="left:1731.5px;top:270.82px;font-size:18px;letter-spacing:0px;color:#b8b8b8;font-weight:normal;">Y</span>
<div style="left:1752.5px;top:267.0px;width:65.0px;height:25.0px;background:#232323;border-radius:3px;border:1px solid #191919;"></div>
<span class="t" style="left:1756.5px;top:270.82px;font-size:18px;letter-spacing:1.8px;color:#b8b8b8;font-weight:normal;">-0.472</span>
<span class="t" style="left:1826.0px;top:270.82px;font-size:18px;letter-spacing:0px;color:#b8b8b8;font-weight:normal;">Z</span>
<div style="left:1848px;top:267.0px;width:65.5px;height:25.0px;background:#232323;border-radius:3px;border:1px solid #191919;"></div>
<span class="t" style="left:1852.0px;top:270.82px;font-size:18px;letter-spacing:0px;color:#b8b8b8;font-weight:normal;">0</span>
<span class="t" style="left:1523.5px;top:300.82px;font-size:18px;letter-spacing:1.286px;color:#b8b8b8;font-weight:normal;">Rotation</span>
<span class="t" style="left:1635.5px;top:300.82px;font-size:18px;letter-spacing:0px;color:#b8b8b8;font-weight:normal;">X</span>
<div style="left:1657.5px;top:297.0px;width:65.0px;height:25.0px;background:#232323;border-radius:3px;border:1px solid #191919;"></div>
<span class="t" style="left:1661.5px;top:300.82px;font-size:18px;letter-spacing:0px;color:#b8b8b8;font-weight:normal;">0</span>
<span class="t" style="left:1731.5px;top:300.82px;font-size:18px;letter-spacing:0px;color:#b8b8b8;font-weight:normal;">Y</span>
<div style="left:1752.5px;top:297.0px;width:65.0px;height:25.0px;background:#232323;border-radius:3px;border:1px solid #191919;"></div>
<span class="t" style="left:1756.5px;top:300.82px;font-size:18px;letter-spacing:0px;color:#b8b8b8;font-weight:normal;">0</span>
<span class="t" style="left:1826.0px;top:300.82px;font-size:18px;letter-spacing:0px;color:#b8b8b8;font-weight:normal;">Z</span>
<div style="left:1848px;top:297.0px;width:65.5px;height:25.0px;background:#232323;border-radius:3px;border:1px solid #191919;"></div>
<span class="t" style="left:1852.0px;top:300.82px;font-size:18px;letter-spacing:0px;color:#b8b8b8;font-weight:normal;">0</span>
<span class="t" style="left:1523.5px;top:330.82px;font-size:18px;letter-spacing:0.75px;color:#b8b8b8;font-weight:normal;">Scale</span>
<span class="t" style="left:1635.5px;top:330.82px;font-size:18px;letter-spacing:0px;color:#b8b8b8;font-weight:normal;">X</span>
<div style="left:1657.5px;top:327.0px;width:65.0px;height:25.0px;background:#232323;border-radius:3px;border:1px solid #191919;"></div>
<span class="t" style="left:1661.5px;top:330.82px;font-size:18px;letter-spacing:0px;color:#b8b8b8;font-weight:normal;">1</span>
<span class="t" style="left:1731.5px;top:330.82px;font-size:18px;letter-spacing:0px;color:#b8b8b8;font-weight:normal;">Y</span>
<div style="left:1752.5px;top:327.0px;width:65.0px;height:25.0px;background:#232323;border-radius:3px;border:1px solid #191919;"></div>
<span class="t" style="left:1756.5px;top:330.82px;font-size:18px;letter-spacing:0px;color:#b8b8b8;font-weight:normal;">1</span>
<span class="t" style="left:1826.0px;top:330.82px;font-size:18px;letter-spacing:0px;color:#b8b8b8;font-weight:normal;">Z</span>
<div style="left:1848px;top:327.0px;width:65.5px;height:25.0px;background:#232323;border-radius:3px;border:1px solid #191919;"></div>
<span class="t" style="left:1852.0px;top:330.82px;font-size:18px;letter-spacing:0px;color:#b8b8b8;font-weight:normal;">1</span>
<svg style="position:absolute;left:1601px;top:332px;" width="20" height="16" viewBox="0 0 20 16"><path d="M6 3.5H4A4 4 0 0 0 4 11.5H6M10 3.5H12A4 4 0 0 1 12 11.5H10" fill="none" stroke="#b0b0b0" stroke-width="1.5" stroke-dasharray="2.5 1.2"/><path d="M3 1L16 15" stroke="#b0b0b0" stroke-width="1.5"/></svg>
<div style="left:1495px;top:366.5px;width:425px;height:1.5px;background:#1a1a1a;"></div>
<div style="left:1495px;top:368px;width:425px;height:30px;background:#323232;"></div>
<svg style="position:absolute;left:1504px;top:378px;" width="12" height="11" viewBox="0 0 12 11"><path d="M0 0H12L6.0 11Z" fill="#6a6a6a"/></svg>
<svg style="position:absolute;left:1526px;top:373px;" width="22" height="22" viewBox="0 0 22 22"><rect x="2" y="2" width="18" height="18" fill="none" stroke="#9b78d6" stroke-width="1.4"/><g fill="#9b78d6"><rect x="0" y="0" width="4" height="4"/><rect x="18" y="0" width="4" height="4"/><rect x="0" y="18" width="4" height="4"/><rect x="18" y="18" width="4" height="4"/></g><circle cx="10" cy="10" r="3.5" fill="#c4c4c4"/><path d="M4 17Q11 10 18 17Q11 23 4 17Z" fill="#c4c4c4" stroke="#323232" stroke-width="1"/><circle cx="11" cy="17" r="2" fill="#323232"/></svg>
<div style="left:1555px;top:374px;width:21px;height:21px;background:#232323;border-radius:3px"></div>
<svg style="position:absolute;left:1559px;top:379px;" width="13" height="11" viewBox="0 0 13 11"><path d="M1 5.5L4.5 9L12 1.5" fill="none" stroke="#d8d8d8" stroke-width="2"/></svg>
<span class="t" style="left:1585.5px;top:375.32px;font-size:18px;letter-spacing:0.607px;color:#d0d0d0;font-weight:bold;">Sprite Renderer</span>
<svg style="position:absolute;left:1832.5px;top:377px;" width="15" height="15" viewBox="0 0 15 15"><circle cx="7.5" cy="7.5" r="7.2" fill="#c4c4c4"/><path d="M5 5.8A2.5 2.5 0 1 1 8.5 8C7.8 8.4 7.5 8.8 7.5 9.6" fill="none" stroke="#2e2e2e" stroke-width="1.8"/><rect x="6.5" y="10.6" width="2" height="2" fill="#2e2e2e"/></svg>
<svg style="position:absolute;left:1862px;top:377px;" width="16" height="16" viewBox="0 0 16 16"><path d="M0.5 4H15.5M0.5 11H15.5" stroke="#c4c4c4" stroke-width="1.4"/><path d="M5 1V7M11 8V14M8 11V15.5" stroke="#c4c4c4" stroke-width="1.8"/></svg>
<svg style="position:absolute;left:1896px;top:376px;" width="6" height="16" viewBox="0 0 6 16"><circle cx="3" cy="2.5" r="2" fill="#c4c4c4"/><circle cx="3" cy="8" r="2" fill="#c4c4c4"/><circle cx="3" cy="13.5" r="2" fill="#c4c4c4"/></svg>
<span class="t" style="left:1523.5px;top:411.32px;font-size:18px;letter-spacing:0.5px;color:#b8b8b8;font-weight:normal;">Sprite</span>
<div style="left:1705.5px;top:407px;width:208.0px;height:25px;background:#232323;border-radius:3px;border:1px solid #191919;"></div>
<div style="left:1884.5px;top:407px;width:1px;height:25px;background:#1a1a1a;"></div>
<svg style="position:absolute;left:1890px;top:412px;" width="16" height="16" viewBox="0 0 16 16"><circle cx="8" cy="8" r="6.5" fill="none" stroke="#c4c4c4" stroke-width="1.4"/><circle cx="8" cy="8" r="2.5" fill="#c4c4c4"/></svg>
<svg style="position:absolute;left:1710px;top:412px;" width="16" height="16" viewBox="0 0 16 16"><rect x="2" y="2" width="12" height="12" fill="none" stroke="#9b78d6" stroke-width="1.2"/><g fill="#9b78d6"><rect x="0" y="0" width="3" height="3"/><rect x="13" y="0" width="3" height="3"/><rect x="0" y="13" width="3" height="3"/><rect x="13" y="13" width="3" height="3"/></g><rect x="5.5" y="5.5" width="5" height="5" fill="#c4c4c4"/></svg>
<span class="t" style="left:1728.5px;top:411.32px;font-size:18px;letter-spacing:0.833px;color:#b8b8b8;font-weight:normal;">Knob</span>
<span class="t" style="left:1523.5px;top:441.32px;font-size:18px;letter-spacing:0.75px;color:#b8b8b8;font-weight:normal;">Color</span>
<div style="left:1705px;top:437.5px;width:208px;height:24.0px;background:#232323;border-radius:3px;border:1px solid #191919;"></div>
<div style="left:1706px;top:438.5px;width:179px;height:19px;background:#00f91e;"></div>
<div style="left:1706px;top:457.5px;width:179px;height:3.5px;background:#ffffff;"></div>
<svg style="position:absolute;left:1892px;top:441px;" width="17" height="17" viewBox="0 0 17 17"><path d="M2 15L10 7" stroke="#c4c4c4" stroke-width="2.2"/><path d="M9 4L13 8" stroke="#c4c4c4" stroke-width="3"/><path d="M11 6L14 3A1.5 1.5 0 0 1 16 5L13 8" fill="#c4c4c4" stroke="#c4c4c4" stroke-width="2"/></svg>
<span class="t" style="left:1523.5px;top:471.32px;font-size:18px;letter-spacing:0.833px;color:#b8b8b8;font-weight:normal;">Flip</span>
<div style="left:1705px;top:470px;width:21px;height:19px;background:#232323;border-radius:3px"></div>
<span class="t" style="left:1732.5px;top:471.32px;font-size:18px;letter-spacing:0px;color:#b8b8b8;font-weight:normal;">X</span>
<div style="left:1750.5px;top:470px;width:21px;height:19px;background:#232323;border-radius:3px"></div>
<span class="t" style="left:1778.0px;top:471.32px;font-size:18px;letter-spacing:0px;color:#b8b8b8;font-weight:normal;">Y</span>
<span class="t" style="left:1523.5px;top:500.82px;font-size:18px;letter-spacing:1.0px;color:#b8b8b8;font-weight:normal;">Draw Mode</span>
<div style="left:1706px;top:497.5px;width:207px;height:24.5px;background:#414141;border-radius:4px;border:1px solid #2c2c2c;"></div>
<span class="t" style="left:1712.0px;top:501.07px;font-size:18px;letter-spacing:0.6px;color:#b8b8b8;font-weight:normal;">Simple</span>
<svg style="position:absolute;left:1893.5px;top:506.75px;" width="11" height="6" viewBox="0 0 11 6"><path d="M0 0H11L5.5 6Z" fill="#c4c4c4"/></svg>
<span class="t" style="left:1523.5px;top:530.82px;font-size:18px;letter-spacing:0.9px;color:#b8b8b8;font-weight:normal;">Mask Interaction</span>
<div style="left:1706px;top:527.5px;width:207px;height:24.5px;background:#414141;border-radius:4px;border:1px solid #2c2c2c;"></div>
<span class="t" style="left:1712.0px;top:531.07px;font-size:18px;letter-spacing:1.0px;color:#b8b8b8;font-weight:normal;">None</span>
<svg style="position:absolute;left:1893.5px;top:536.75px;" width="11" height="6" viewBox="0 0 11 6"><path d="M0 0H11L5.5 6Z" fill="#c4c4c4"/></svg>
<span class="t" style="left:1523.5px;top:560.82px;font-size:18px;letter-spacing:0.594px;color:#b8b8b8;font-weight:normal;">Sprite Sort Point</span>
<div style="left:1706px;top:557.5px;width:207px;height:24.5px;background:#414141;border-radius:4px;border:1px solid #2c2c2c;"></div>
<span class="t" style="left:1712.0px;top:561.07px;font-size:18px;letter-spacing:1.1px;color:#b8b8b8;font-weight:normal;">Center</span>
<svg style="position:absolute;left:1893.5px;top:566.75px;" width="11" height="6" viewBox="0 0 11 6"><path d="M0 0H11L5.5 6Z" fill="#c4c4c4"/></svg>
<span class="t" style="left:1523.5px;top:591.32px;font-size:18px;letter-spacing:0.857px;color:#b8b8b8;font-weight:normal;">Material</span>
<div style="left:1705.5px;top:587px;width:208.0px;height:25.5px;background:#232323;border-radius:3px;border:1px solid #191919;"></div>
<div style="left:1884.5px;top:587px;width:1px;height:25.5px;background:#1a1a1a;"></div>
<svg style="position:absolute;left:1890px;top:592px;" width="16" height="16" viewBox="0 0 16 16"><circle cx="8" cy="8" r="6.5" fill="none" stroke="#c4c4c4" stroke-width="1.4"/><circle cx="8" cy="8" r="2.5" fill="#c4c4c4"/></svg>
<svg style="position:absolute;left:1709px;top:592px;" width="16" height="16" viewBox="0 0 16 16"><circle cx="8" cy="8" r="7.5" fill="#2e6e96"/><circle cx="8.5" cy="7.5" r="6" fill="#89c9ec"/><circle cx="10" cy="6" r="4.2" fill="#2e6e96"/></svg>
<span class="t" style="left:1728.5px;top:591.82px;font-size:18px;letter-spacing:1.0px;color:#b8b8b8;font-weight:normal;">Sprites-Default</span>
<svg style="position:absolute;left:1504.5px;top:625px;" width="12" height="11" viewBox="0 0 12 11"><path d="M0 0H12L6.0 11Z" fill="#6a6a6a"/></svg>
<span class="t" style="left:1525.5px;top:621.82px;font-size:18px;letter-spacing:0.583px;color:#d0d0d0;font-weight:bold;">Additional Settings</span>
<span class="t" style="left:1546.5px;top:650.82px;font-size:18px;letter-spacing:0.833px;color:#b8b8b8;font-weight:normal;">Sorting Layer</span>
<div style="left:1706px;top:647.5px;width:207px;height:24.5px;background:#414141;border-radius:4px;border:1px solid #2c2c2c;"></div>
<span class="t" style="left:1712.0px;top:651.07px;font-size:18px;letter-spacing:0.833px;color:#b8b8b8;font-weight:normal;">Default</span>
<svg style="position:absolute;left:1893.5px;top:656.75px;" width="11" height="6" viewBox="0 0 11 6"><path d="M0 0H11L5.5 6Z" fill="#c4c4c4"/></svg>
<span class="t" style="left:1546.5px;top:680.82px;font-size:18px;letter-spacing:0.615px;color:#b8b8b8;font-weight:normal;">Order in Layer</span>
<div style="left:1705.5px;top:677px;width:207.5px;height:25.5px;background:#232323;border-radius:3px;border:1px solid #191919;"></div>
<span class="t" style="left:1709.5px;top:680.82px;font-size:18px;letter-spacing:0px;color:#b8b8b8;font-weight:normal;">0</span>
<div style="left:1495px;top:714px;width:425px;height:1.5px;background:#1a1a1a;"></div>
<div style="left:1495px;top:715.5px;width:425px;height:83px;background:#303030;"></div>
<div style="left:1519px;top:725px;width:48px;height:48px;background:#2a2a2a;border-radius:3px"></div>
<div style="left:1525px;top:731px;width:36px;height:36px;background:#d4d4d4;"></div>
<span class="t" style="left:1580.0px;top:726.36px;font-size:20px;letter-spacing:0.87px;color:#b8b8b8;font-weight:normal;">Sprites-Default (Material)</span>
<svg style="position:absolute;left:1876.5px;top:728.5px;" width="15" height="15" viewBox="0 0 15 15"><circle cx="7.5" cy="7.5" r="7.2" fill="#c4c4c4"/><path d="M5 5.8A2.5 2.5 0 1 1 8.5 8C7.8 8.4 7.5 8.8 7.5 9.6" fill="none" stroke="#2e2e2e" stroke-width="1.8"/><rect x="6.5" y="10.6" width="2" height="2" fill="#2e2e2e"/></svg>
<svg style="position:absolute;left:1904px;top:728px;" width="6" height="16" viewBox="0 0 6 16"><circle cx="3" cy="2.5" r="2" fill="#c4c4c4"/><circle cx="3" cy="8" r="2" fill="#c4c4c4"/><circle cx="3" cy="13.5" r="2" fill="#c4c4c4"/></svg>
<span class="t" style="left:1575.0px;top:762.82px;font-size:18px;letter-spacing:0.7px;color:#6e6e6e;font-weight:normal;">Shader</span>
<div style="left:1652px;top:759.5px;width:187px;height:24.5px;background:#383838;border-radius:3px;border:1px solid #191919;"></div>
<span class="t" style="left:1657.5px;top:762.82px;font-size:18px;letter-spacing:0.929px;color:#6e6e6e;font-weight:normal;">Sprites/Default</span>
<svg style="position:absolute;left:1819.5px;top:768.5px;" width="11" height="6" viewBox="0 0 11 6"><path d="M0 0H11L5.5 6Z" fill="#6e6e6e"/></svg>
<div style="left:1845.5px;top:759.5px;width:66.0px;height:24.5px;background:#383838;border-radius:3px;border:1px solid #191919;"></div>
<span class="t" style="left:1855.5px;top:762.82px;font-size:18px;letter-spacing:0.0px;color:#6e6e6e;font-weight:normal;">Edit...</span>
<svg style="position:absolute;left:1506px;top:775px;" width="10" height="13" viewBox="0 0 10 13"><path d="M0 0L10 6.5L0 13Z" fill="#5a5a5a"/></svg>
<div style="left:1495px;top:797.5px;width:425px;height:1.5px;background:#1a1a1a;"></div>
<div style="left:1495px;top:799px;width:425px;height:15px;background:#303030;"></div>
<div style="left:1495px;top:814px;width:425px;height:1.5px;background:#1a1a1a;"></div>
<div style="left:1536px;top:829px;width:343px;height:34px;background:#414141;border-radius:4px;border:1px solid #262626"></div>
<span class="t" style="left:1637.5px;top:836.82px;font-size:18px;letter-spacing:0.792px;color:#d0d0d0;font-weight:normal;">Add Component</span>
<div style="left:0px;top:1047px;width:1920px;height:33px;background:#151515;"></div>
<div style="left:0px;top:1078px;width:1920px;height:2px;background:#1e1e1e;"></div>
<div style="left:72px;top:1078px;width:516px;height:2px;background:#5e5e5e;"></div>
<div style="left:965px;top:1078px;width:74px;height:2px;background:#5e5e5e;"></div>
<div style="left:1762px;top:1050px;width:1px;height:28px;background:#262626;"></div>
<div style="left:1801px;top:1050px;width:1px;height:28px;background:#262626;"></div>
<div style="left:1840px;top:1050px;width:1px;height:28px;background:#262626;"></div>
<div style="left:1879px;top:1050px;width:1px;height:28px;background:#262626;"></div>
<svg style="position:absolute;left:1771px;top:1054px;" width="22" height="22" viewBox="0 0 22 22"><ellipse cx="11" cy="13" rx="6" ry="7.5" fill="#a8a8a8"/><circle cx="11" cy="5" r="3.2" fill="#a8a8a8"/><path d="M4 9L1 7M18 9L21 7M4 14H0.5M18 14H21.5M4.5 18L2 21M17.5 18L20 21" stroke="#a8a8a8" stroke-width="1.5"/><path d="M3 2L20 20" stroke="#161616" stroke-width="3"/><path d="M3 2L20 20" stroke="#a8a8a8" stroke-width="1.4"/></svg>
<svg style="position:absolute;left:1811px;top:1055px;" width="22" height="21" viewBox="0 0 22 21"><ellipse cx="10.5" cy="3.5" rx="9" ry="3.2" fill="#a8a8a8"/><path d="M1.5 5.5V9A9 3.2 0 0 0 19.5 9V5.5A9 3.2 0 0 1 1.5 5.5Z" fill="#a8a8a8"/><path d="M1.5 11.5V15A9 3.2 0 0 0 19.5 15V11.5A9 3.2 0 0 1 1.5 11.5Z" fill="#a8a8a8"/><path d="M2 1L20 20" stroke="#161616" stroke-width="3"/><path d="M2 1L20 20" stroke="#a8a8a8" stroke-width="1.4"/></svg>
<svg style="position:absolute;left:1850px;top:1054px;" width="22" height="22" viewBox="0 0 22 22"><path d="M3 8A8.5 8.5 0 0 1 17 4M19 14A8.5 8.5 0 0 1 5 18" fill="none" stroke="#a8a8a8" stroke-width="1.6"/><path d="M17 1V5H13M5 21V17H9" fill="none" stroke="#a8a8a8" stroke-width="1.6"/><circle cx="11" cy="10" r="4" fill="#a8a8a8"/><path d="M8 14H14V17H8Z" fill="#a8a8a8"/><path d="M2 2L20 20" stroke="#161616" stroke-width="3"/><path d="M2 2L20 20" stroke="#a8a8a8" stroke-width="1.4"/></svg>
<svg style="position:absolute;left:1888px;top:1054px;" width="22" height="22" viewBox="0 0 22 22"><circle cx="11" cy="11" r="10" fill="none" stroke="#a8a8a8" stroke-width="1.5"/><path d="M6.5 11L9.8 14.2L15.5 8" fill="none" stroke="#a8a8a8" stroke-width="1.8"/></svg>
<svg style="position:absolute;left:1570px;top:950px;" width="350" height="130" viewBox="0 0 350 130"><path d="M60.3 88.3L94.6 54L60.3 18.5L15.7 66L60.3 113.4L77 96.5" fill="none" stroke="rgba(130,150,30,0.15)" stroke-width="14.5" stroke-linejoin="round" stroke-linecap="butt"/><text x="119" y="96" font-family="Liberation Sans" font-size="85" font-weight="bold" fill="rgba(255,255,255,0.028)" letter-spacing="-2">Platzi</text></svg>
</body></html>
